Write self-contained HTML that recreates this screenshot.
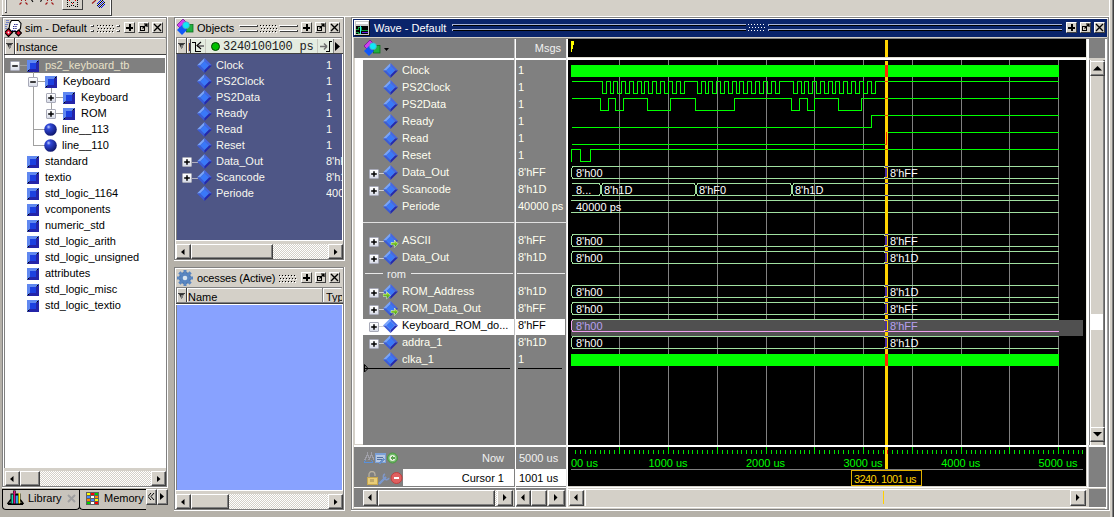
<!DOCTYPE html><html><head><meta charset="utf-8"><style>html,body{margin:0;padding:0;}body{width:1114px;height:517px;overflow:hidden;position:relative;background:#d4d0c8;font-family:'Liberation Sans', sans-serif;}.a{position:absolute;box-sizing:content-box;}.t{position:absolute;font:11px/13px 'Liberation Sans', sans-serif;white-space:pre;}</style></head><body>
<div class="a" style="left:0px;top:0px;width:1114px;height:16px;background:#d4d0c8;"></div>
<div class="a" style="left:2px;top:0px;width:1px;height:15px;background:#fff;"></div>
<div class="a" style="left:5px;top:0px;width:1px;height:13px;background:#fff;"></div>
<div class="a" style="left:6px;top:0px;width:1px;height:13px;background:#808080;"></div>
<div class="a" style="left:5px;top:12px;width:2px;height:1px;background:#404040;"></div>
<div class="a" style="left:2px;top:15px;width:110px;height:1px;background:#404040;"></div>
<div class="a" style="left:111px;top:0px;width:1px;height:16px;background:#404040;"></div>
<div class="a" style="left:110px;top:0px;width:1px;height:15px;background:#fff;"></div>
<div class="a" style="left:0px;top:16px;width:1115px;height:1px;background:#fff;"></div>
<svg class="a" style="left:0px;top:0px;" width="60" height="8" viewBox="0 0 60 8" shape-rendering="crispEdges"><g shape-rendering="geometricPrecision" fill="none"><path d="M21.5 0V1M21.5 2.5L19.5 4.5M25.5 0V1M25.5 2.5L27.5 4.5M47.5 0V1M47.5 2.5L45.5 4.5M51.5 0V1M51.5 2.5L53.5 4.5" stroke="#a01818" stroke-width="1.1"/><path d="M31.5 0L33 1.8M41.5 0L40.5 1.8" stroke="#000" stroke-width="1.1"/></g></svg>
<div class="a" style="left:62px;top:-2px;width:19px;height:11px;background:#d4d0c8;border-left:1px solid #fff;border-bottom:1px solid #404040;border-right:1px solid #404040"></div>
<svg class="a" style="left:67px;top:0px;" width="11" height="8" viewBox="0 0 11 8" shape-rendering="crispEdges"><rect x="0" y="0" width="1" height="1" fill="#000"/><rect x="10" y="0" width="1" height="1" fill="#000"/><rect x="0" y="2" width="1" height="1" fill="#000"/><rect x="10" y="2" width="1" height="1" fill="#000"/><rect x="0" y="4" width="1" height="1" fill="#000"/><rect x="10" y="4" width="1" height="1" fill="#000"/><rect x="0" y="6" width="1" height="1" fill="#000"/><rect x="10" y="6" width="1" height="1" fill="#000"/><rect x="2" y="6" width="1" height="1" fill="#000"/><rect x="4" y="5" width="1" height="1" fill="#000"/><rect x="6" y="5" width="1" height="1" fill="#000"/><rect x="8" y="6" width="1" height="1" fill="#000"/><rect x="4" y="2" width="1" height="1" fill="#000"/><rect x="6" y="2" width="1" height="1" fill="#000"/><rect x="2" y="0" width="1" height="1" fill="#f00"/><rect x="8" y="0" width="1" height="1" fill="#f00"/><rect x="5" y="3" width="1" height="1" fill="#f00"/></svg>
<svg class="a" style="left:0px;top:0px;" width="110" height="9" viewBox="0 0 110 9" shape-rendering="crispEdges"><path d="M92 3.5L96 0" stroke="#a02020" stroke-width="1.2" shape-rendering="geometricPrecision"/><rect x="100" y="0" width="1" height="1" fill="#0010f0"/><rect x="102" y="0" width="1" height="1" fill="#000"/><rect x="99" y="1" width="1" height="1" fill="#0010f0"/><rect x="101" y="1" width="1" height="1" fill="#000"/><rect x="103" y="1" width="1" height="1" fill="#0010f0"/><rect x="98" y="2" width="1" height="1" fill="#0010f0"/><rect x="100" y="2" width="1" height="1" fill="#000"/><rect x="102" y="2" width="1" height="1" fill="#0010f0"/><rect x="104" y="2" width="1" height="1" fill="#000"/><rect x="97" y="3" width="1" height="1" fill="#0010f0"/><rect x="99" y="3" width="1" height="1" fill="#000"/><rect x="101" y="3" width="1" height="1" fill="#0010f0"/><rect x="103" y="3" width="1" height="1" fill="#000"/><rect x="98" y="4" width="1" height="1" fill="#000"/><rect x="100" y="4" width="1" height="1" fill="#0010f0"/><rect x="102" y="4" width="1" height="1" fill="#000"/><rect x="104" y="4" width="1" height="1" fill="#0010f0"/><rect x="97" y="5" width="1" height="1" fill="#000"/><rect x="99" y="5" width="1" height="1" fill="#0010f0"/><rect x="101" y="5" width="1" height="1" fill="#000"/><rect x="103" y="5" width="1" height="1" fill="#0010f0"/><rect x="98" y="6" width="1" height="1" fill="#0010f0"/><rect x="100" y="6" width="1" height="1" fill="#000"/><rect x="102" y="6" width="1" height="1" fill="#0010f0"/><rect x="99" y="7" width="1" height="1" fill="#000"/><rect x="101" y="7" width="1" height="1" fill="#0010f0"/></svg>
<div class="a" style="left:0px;top:17px;width:1114px;height:500px;background:#b5b1a9;"></div>
<div class="a" style="left:2px;top:17px;width:166px;height:494px;background:#d4d0c8;"></div>
<svg class="a" style="left:5px;top:19px;" width="17" height="18" viewBox="0 0 17 18" shape-rendering="crispEdges"><g shape-rendering="geometricPrecision"><path d="M1 1.5h3M1 3.5h3M0 5.5h3M0 7.5h2M0 9.5h2" stroke="#7080c8"/><polygon points="6.5,1.5 13.5,1.5 16,4.5 15.5,9 14,12.5 6,12.5 4,10 5,4" fill="#fff" stroke="#000" stroke-width="1.1"/><path d="M9 5.5h4M8 7.5h4M8 9.5h4M7 11.5h4" stroke="#303090" stroke-dasharray="1.5 0.7"/><polygon points="3.5,9.5 7.5,13.5 3.5,17.5 -0.5,13.5" fill="#e01030" stroke="#000" stroke-width="1.2"/><circle cx="3.5" cy="13.5" r="0.9" fill="#fff"/><polygon points="13.5,11 16.5,14 13.5,17 10.5,14" fill="#e01030" stroke="#000" stroke-width="1.2"/></g></svg>
<div class="t" style="left:25px;top:22px;color:#000;">sim - Default</div>
<div class="a" style="left:90px;top:25px;width:4px;height:1px;background:#fff;"></div>
<div class="a" style="left:91px;top:26px;width:3px;height:1px;background:#404040;"></div>
<div class="a" style="left:93px;top:25px;width:1px;height:2px;background:#404040;"></div>
<div class="a" style="left:90px;top:30px;width:4px;height:1px;background:#fff;"></div>
<div class="a" style="left:91px;top:31px;width:3px;height:1px;background:#404040;"></div>
<div class="a" style="left:93px;top:30px;width:1px;height:2px;background:#404040;"></div>
<svg class="a" style="left:97px;top:25px;" width="19" height="8" viewBox="0 0 19 8" shape-rendering="crispEdges"><rect x="0" y="0" width="1" height="1" fill="#000"/><rect x="1" y="1" width="1" height="1" fill="#fff"/><rect x="3" y="0" width="1" height="1" fill="#000"/><rect x="4" y="1" width="1" height="1" fill="#fff"/><rect x="6" y="0" width="1" height="1" fill="#000"/><rect x="7" y="1" width="1" height="1" fill="#fff"/><rect x="9" y="0" width="1" height="1" fill="#000"/><rect x="10" y="1" width="1" height="1" fill="#fff"/><rect x="12" y="0" width="1" height="1" fill="#000"/><rect x="13" y="1" width="1" height="1" fill="#fff"/><rect x="15" y="0" width="1" height="1" fill="#000"/><rect x="16" y="1" width="1" height="1" fill="#fff"/><rect x="1" y="3" width="1" height="1" fill="#000"/><rect x="2" y="4" width="1" height="1" fill="#fff"/><rect x="4" y="3" width="1" height="1" fill="#000"/><rect x="5" y="4" width="1" height="1" fill="#fff"/><rect x="7" y="3" width="1" height="1" fill="#000"/><rect x="8" y="4" width="1" height="1" fill="#fff"/><rect x="10" y="3" width="1" height="1" fill="#000"/><rect x="11" y="4" width="1" height="1" fill="#fff"/><rect x="13" y="3" width="1" height="1" fill="#000"/><rect x="14" y="4" width="1" height="1" fill="#fff"/><rect x="16" y="3" width="1" height="1" fill="#000"/><rect x="17" y="4" width="1" height="1" fill="#fff"/><rect x="0" y="6" width="1" height="1" fill="#000"/><rect x="1" y="7" width="1" height="1" fill="#fff"/><rect x="3" y="6" width="1" height="1" fill="#000"/><rect x="4" y="7" width="1" height="1" fill="#fff"/><rect x="6" y="6" width="1" height="1" fill="#000"/><rect x="7" y="7" width="1" height="1" fill="#fff"/><rect x="9" y="6" width="1" height="1" fill="#000"/><rect x="10" y="7" width="1" height="1" fill="#fff"/><rect x="12" y="6" width="1" height="1" fill="#000"/><rect x="13" y="7" width="1" height="1" fill="#fff"/><rect x="15" y="6" width="1" height="1" fill="#000"/><rect x="16" y="7" width="1" height="1" fill="#fff"/></svg>
<div class="a" style="left:116px;top:25px;width:4px;height:1px;background:#fff;"></div>
<div class="a" style="left:117px;top:26px;width:3px;height:1px;background:#404040;"></div>
<div class="a" style="left:119px;top:25px;width:1px;height:2px;background:#404040;"></div>
<div class="a" style="left:116px;top:30px;width:4px;height:1px;background:#fff;"></div>
<div class="a" style="left:117px;top:31px;width:3px;height:1px;background:#404040;"></div>
<div class="a" style="left:119px;top:30px;width:1px;height:2px;background:#404040;"></div>
<div class="a" style="left:124px;top:22px;width:9px;height:9px;background:#d4d0c8;border:1px solid;border-color:#fff #404040 #404040 #fff"></div>
<svg class="a" style="left:126px;top:24px;" width="7" height="7" viewBox="0 0 7 7" shape-rendering="crispEdges"><rect x="3" y="0" width="2" height="7" fill="#000"/><rect x="0" y="3" width="7" height="2" fill="#000"/></svg>
<div class="a" style="left:138px;top:22px;width:9px;height:9px;background:#d4d0c8;border:1px solid;border-color:#fff #404040 #404040 #fff"></div>
<svg class="a" style="left:140px;top:23px;" width="8" height="8" viewBox="0 0 8 8" shape-rendering="crispEdges"><rect x="0.5" y="3.5" width="4" height="4" fill="none" stroke="#000"/><path d="M2.5 5.5 L7 1 M4 1 H7 V4" stroke="#000" stroke-width="1.2" fill="none" shape-rendering="geometricPrecision"/></svg>
<div class="a" style="left:152px;top:22px;width:9px;height:9px;background:#d4d0c8;border:1px solid;border-color:#fff #404040 #404040 #fff"></div>
<svg class="a" style="left:153px;top:23px;" width="9" height="9" viewBox="0 0 9 9" shape-rendering="crispEdges"><path d="M1 1 L8 8 M8 1 L1 8" stroke="#000" stroke-width="1.4" shape-rendering="geometricPrecision"/></svg>
<div class="a" style="left:4px;top:37px;width:162px;height:18px;background:#d4d0c8;"></div>
<div class="a" style="left:4px;top:37px;width:162px;height:1px;background:#808080;"></div>
<div class="a" style="left:5px;top:38px;width:160px;height:1px;background:#fff;"></div>
<div class="a" style="left:4px;top:37px;width:1px;height:18px;background:#808080;"></div>
<div class="a" style="left:5px;top:38px;width:1px;height:16px;background:#fff;"></div>
<div class="a" style="left:4px;top:54px;width:162px;height:1px;background:#404040;"></div>
<div class="a" style="left:14px;top:38px;width:1px;height:16px;background:#404040;"></div>
<div class="a" style="left:15px;top:38px;width:1px;height:16px;background:#fff;"></div>
<svg class="a" style="left:6px;top:43px;" width="8" height="8" viewBox="0 0 8 8" shape-rendering="crispEdges"><path d="M0 0h7v1H0z" fill="#404040"/><path d="M1 1h5L3.5 6z" fill="#303030" shape-rendering="geometricPrecision"/><path d="M2.5 2h2v3h-2z" fill="#808080"/></svg>
<div class="t" style="left:16px;top:41px;color:#000;">Instance</div>
<div class="a" style="left:5px;top:55px;width:161px;height:413px;background:#fff;"></div>
<div class="a" style="left:4px;top:55px;width:1px;height:413px;background:#808080;"></div>
<div class="a" style="left:5px;top:58px;width:160px;height:15px;background:#808080;"></div>
<div class="a" style="left:33px;top:72px;width:1px;height:74px;background:#a0a0a0;"></div>
<div class="a" style="left:33px;top:145px;width:12px;height:1px;background:#a0a0a0;"></div>
<div class="a" style="left:33px;top:129px;width:12px;height:1px;background:#a0a0a0;"></div>
<div class="a" style="left:51px;top:88px;width:1px;height:26px;background:#a0a0a0;"></div>
<div class="a" style="left:51px;top:97px;width:12px;height:1px;background:#a0a0a0;"></div>
<div class="a" style="left:51px;top:113px;width:12px;height:1px;background:#a0a0a0;"></div>
<div class="a" style="left:20px;top:65px;width:8px;height:1px;background:#a0a0a0;"></div>
<div class="a" style="left:38px;top:81px;width:8px;height:1px;background:#a0a0a0;"></div>
<svg class="a" style="left:27px;top:60px;" width="12" height="12" viewBox="0 0 12 12" shape-rendering="crispEdges"><rect x="0" y="0" width="12" height="12" fill="#6088f0"/><polygon points="12,0 12,12 0,12" fill="#2424a8"/><rect x="3" y="3" width="6" height="6" fill="#1c40e0"/><path d="M9.5 2.5L11.5 0.5M0.5 11.5L2.5 9.5" stroke="#000" shape-rendering="geometricPrecision"/></svg>
<div class="a" style="left:10px;top:61px;width:8px;height:8px;border:1px solid #a8aab8;border-radius:1px;background:linear-gradient(#fff,#d8dce8)"></div>
<svg class="a" style="left:10px;top:61px;" width="10" height="10" viewBox="0 0 10 10" shape-rendering="crispEdges"><path d="M2.2 5H7.8" stroke="#000" stroke-width="1.5" shape-rendering="geometricPrecision"/></svg>
<div class="t" style="left:45px;top:59px;color:#e8e0c8;">ps2_keyboard_tb</div>
<svg class="a" style="left:45px;top:76px;" width="12" height="12" viewBox="0 0 12 12" shape-rendering="crispEdges"><rect x="0" y="0" width="12" height="12" fill="#6088f0"/><polygon points="12,0 12,12 0,12" fill="#2424a8"/><rect x="3" y="3" width="6" height="6" fill="#1c40e0"/><path d="M9.5 2.5L11.5 0.5M0.5 11.5L2.5 9.5" stroke="#000" shape-rendering="geometricPrecision"/></svg>
<div class="a" style="left:28px;top:77px;width:8px;height:8px;border:1px solid #a8aab8;border-radius:1px;background:linear-gradient(#fff,#d8dce8)"></div>
<svg class="a" style="left:28px;top:77px;" width="10" height="10" viewBox="0 0 10 10" shape-rendering="crispEdges"><path d="M2.2 5H7.8" stroke="#000" stroke-width="1.5" shape-rendering="geometricPrecision"/></svg>
<div class="t" style="left:63px;top:75px;color:#000;">Keyboard</div>
<svg class="a" style="left:63px;top:92px;" width="12" height="12" viewBox="0 0 12 12" shape-rendering="crispEdges"><rect x="0" y="0" width="12" height="12" fill="#6088f0"/><polygon points="12,0 12,12 0,12" fill="#2424a8"/><rect x="3" y="3" width="6" height="6" fill="#1c40e0"/><path d="M9.5 2.5L11.5 0.5M0.5 11.5L2.5 9.5" stroke="#000" shape-rendering="geometricPrecision"/></svg>
<div class="a" style="left:46px;top:93px;width:8px;height:8px;border:1px solid #a8aab8;border-radius:1px;background:linear-gradient(#fff,#d8dce8)"></div>
<svg class="a" style="left:46px;top:93px;" width="10" height="10" viewBox="0 0 10 10" shape-rendering="crispEdges"><path d="M2.2 5H7.8M5 2.2V7.8" stroke="#000" stroke-width="1.5" shape-rendering="geometricPrecision"/></svg>
<div class="t" style="left:81px;top:91px;color:#000;">Keyboard</div>
<svg class="a" style="left:63px;top:108px;" width="12" height="12" viewBox="0 0 12 12" shape-rendering="crispEdges"><rect x="0" y="0" width="12" height="12" fill="#6088f0"/><polygon points="12,0 12,12 0,12" fill="#2424a8"/><rect x="3" y="3" width="6" height="6" fill="#1c40e0"/><path d="M9.5 2.5L11.5 0.5M0.5 11.5L2.5 9.5" stroke="#000" shape-rendering="geometricPrecision"/></svg>
<div class="a" style="left:46px;top:109px;width:8px;height:8px;border:1px solid #a8aab8;border-radius:1px;background:linear-gradient(#fff,#d8dce8)"></div>
<svg class="a" style="left:46px;top:109px;" width="10" height="10" viewBox="0 0 10 10" shape-rendering="crispEdges"><path d="M2.2 5H7.8M5 2.2V7.8" stroke="#000" stroke-width="1.5" shape-rendering="geometricPrecision"/></svg>
<div class="t" style="left:81px;top:107px;color:#000;">ROM</div>
<svg class="a" style="left:44px;top:123px;" width="13" height="13" viewBox="0 0 13 13" shape-rendering="crispEdges"><defs><radialGradient id="sg" cx="0.35" cy="0.3" r="0.7"><stop offset="0" stop-color="#c0d0ff"/><stop offset="0.25" stop-color="#3048d8"/><stop offset="1" stop-color="#101870"/></radialGradient></defs><circle cx="6.5" cy="6.5" r="6.3" fill="url(#sg)" shape-rendering="geometricPrecision"/></svg>
<div class="t" style="left:62px;top:123px;color:#000;">line__113</div>
<svg class="a" style="left:44px;top:139px;" width="13" height="13" viewBox="0 0 13 13" shape-rendering="crispEdges"><defs><radialGradient id="sg" cx="0.35" cy="0.3" r="0.7"><stop offset="0" stop-color="#c0d0ff"/><stop offset="0.25" stop-color="#3048d8"/><stop offset="1" stop-color="#101870"/></radialGradient></defs><circle cx="6.5" cy="6.5" r="6.3" fill="url(#sg)" shape-rendering="geometricPrecision"/></svg>
<div class="t" style="left:62px;top:139px;color:#000;">line__110</div>
<svg class="a" style="left:27px;top:156px;" width="12" height="12" viewBox="0 0 12 12" shape-rendering="crispEdges"><rect x="0" y="0" width="12" height="12" fill="#6088f0"/><polygon points="12,0 12,12 0,12" fill="#2424a8"/><rect x="3" y="3" width="6" height="6" fill="#1c40e0"/><path d="M9.5 2.5L11.5 0.5M0.5 11.5L2.5 9.5" stroke="#000" shape-rendering="geometricPrecision"/></svg>
<div class="t" style="left:45px;top:155px;color:#000;">standard</div>
<svg class="a" style="left:27px;top:172px;" width="12" height="12" viewBox="0 0 12 12" shape-rendering="crispEdges"><rect x="0" y="0" width="12" height="12" fill="#6088f0"/><polygon points="12,0 12,12 0,12" fill="#2424a8"/><rect x="3" y="3" width="6" height="6" fill="#1c40e0"/><path d="M9.5 2.5L11.5 0.5M0.5 11.5L2.5 9.5" stroke="#000" shape-rendering="geometricPrecision"/></svg>
<div class="t" style="left:45px;top:171px;color:#000;">textio</div>
<svg class="a" style="left:27px;top:188px;" width="12" height="12" viewBox="0 0 12 12" shape-rendering="crispEdges"><rect x="0" y="0" width="12" height="12" fill="#6088f0"/><polygon points="12,0 12,12 0,12" fill="#2424a8"/><rect x="3" y="3" width="6" height="6" fill="#1c40e0"/><path d="M9.5 2.5L11.5 0.5M0.5 11.5L2.5 9.5" stroke="#000" shape-rendering="geometricPrecision"/></svg>
<div class="t" style="left:45px;top:187px;color:#000;">std_logic_1164</div>
<svg class="a" style="left:27px;top:204px;" width="12" height="12" viewBox="0 0 12 12" shape-rendering="crispEdges"><rect x="0" y="0" width="12" height="12" fill="#6088f0"/><polygon points="12,0 12,12 0,12" fill="#2424a8"/><rect x="3" y="3" width="6" height="6" fill="#1c40e0"/><path d="M9.5 2.5L11.5 0.5M0.5 11.5L2.5 9.5" stroke="#000" shape-rendering="geometricPrecision"/></svg>
<div class="t" style="left:45px;top:203px;color:#000;">vcomponents</div>
<svg class="a" style="left:27px;top:220px;" width="12" height="12" viewBox="0 0 12 12" shape-rendering="crispEdges"><rect x="0" y="0" width="12" height="12" fill="#6088f0"/><polygon points="12,0 12,12 0,12" fill="#2424a8"/><rect x="3" y="3" width="6" height="6" fill="#1c40e0"/><path d="M9.5 2.5L11.5 0.5M0.5 11.5L2.5 9.5" stroke="#000" shape-rendering="geometricPrecision"/></svg>
<div class="t" style="left:45px;top:219px;color:#000;">numeric_std</div>
<svg class="a" style="left:27px;top:236px;" width="12" height="12" viewBox="0 0 12 12" shape-rendering="crispEdges"><rect x="0" y="0" width="12" height="12" fill="#6088f0"/><polygon points="12,0 12,12 0,12" fill="#2424a8"/><rect x="3" y="3" width="6" height="6" fill="#1c40e0"/><path d="M9.5 2.5L11.5 0.5M0.5 11.5L2.5 9.5" stroke="#000" shape-rendering="geometricPrecision"/></svg>
<div class="t" style="left:45px;top:235px;color:#000;">std_logic_arith</div>
<svg class="a" style="left:27px;top:252px;" width="12" height="12" viewBox="0 0 12 12" shape-rendering="crispEdges"><rect x="0" y="0" width="12" height="12" fill="#6088f0"/><polygon points="12,0 12,12 0,12" fill="#2424a8"/><rect x="3" y="3" width="6" height="6" fill="#1c40e0"/><path d="M9.5 2.5L11.5 0.5M0.5 11.5L2.5 9.5" stroke="#000" shape-rendering="geometricPrecision"/></svg>
<div class="t" style="left:45px;top:251px;color:#000;">std_logic_unsigned</div>
<svg class="a" style="left:27px;top:268px;" width="12" height="12" viewBox="0 0 12 12" shape-rendering="crispEdges"><rect x="0" y="0" width="12" height="12" fill="#6088f0"/><polygon points="12,0 12,12 0,12" fill="#2424a8"/><rect x="3" y="3" width="6" height="6" fill="#1c40e0"/><path d="M9.5 2.5L11.5 0.5M0.5 11.5L2.5 9.5" stroke="#000" shape-rendering="geometricPrecision"/></svg>
<div class="t" style="left:45px;top:267px;color:#000;">attributes</div>
<svg class="a" style="left:27px;top:284px;" width="12" height="12" viewBox="0 0 12 12" shape-rendering="crispEdges"><rect x="0" y="0" width="12" height="12" fill="#6088f0"/><polygon points="12,0 12,12 0,12" fill="#2424a8"/><rect x="3" y="3" width="6" height="6" fill="#1c40e0"/><path d="M9.5 2.5L11.5 0.5M0.5 11.5L2.5 9.5" stroke="#000" shape-rendering="geometricPrecision"/></svg>
<div class="t" style="left:45px;top:283px;color:#000;">std_logic_misc</div>
<svg class="a" style="left:27px;top:300px;" width="12" height="12" viewBox="0 0 12 12" shape-rendering="crispEdges"><rect x="0" y="0" width="12" height="12" fill="#6088f0"/><polygon points="12,0 12,12 0,12" fill="#2424a8"/><rect x="3" y="3" width="6" height="6" fill="#1c40e0"/><path d="M9.5 2.5L11.5 0.5M0.5 11.5L2.5 9.5" stroke="#000" shape-rendering="geometricPrecision"/></svg>
<div class="t" style="left:45px;top:299px;color:#000;">std_logic_textio</div>
<div class="a" style="left:4px;top:468px;width:162px;height:19px;background:#d4d0c8;"></div>
<div class="a" style="left:20px;top:471px;width:131px;height:15px;background-image:repeating-conic-gradient(#fff 0 25%, #d4d0c8 0 50%);background-size:2px 2px"></div>
<div class="a" style="left:5px;top:471px;width:13px;height:13px;background:#d4d0c8;border:1px solid;border-color:#fff #404040 #404040 #fff;box-shadow:inset -1px -1px #808080"></div>
<svg class="a" style="left:10px;top:476px;" width="5" height="8" viewBox="0 0 5 8" shape-rendering="crispEdges"><path d="M3.5 0V6L0 3z" fill="#000" shape-rendering="geometricPrecision"/></svg>
<div class="a" style="left:20px;top:471px;width:18px;height:13px;background:#d4d0c8;border:1px solid;border-color:#fff #404040 #404040 #fff;box-shadow:inset -1px -1px #808080"></div>
<div class="a" style="left:151px;top:471px;width:13px;height:13px;background:#d4d0c8;border:1px solid;border-color:#fff #404040 #404040 #fff;box-shadow:inset -1px -1px #808080"></div>
<svg class="a" style="left:157px;top:476px;" width="5" height="8" viewBox="0 0 5 8" shape-rendering="crispEdges"><path d="M0 0V6L3.5 3z" fill="#000" shape-rendering="geometricPrecision"/></svg>
<div class="a" style="left:2px;top:486px;width:166px;height:1px;background:#404040;"></div>
<div class="a" style="left:2px;top:487px;width:166px;height:1px;background:#fff;"></div>
<div class="a" style="left:0px;top:488px;width:168px;height:29px;background:#b5b1a9;"></div>
<div class="a" style="left:2px;top:489px;width:76px;height:20px;background:#c8c4bc;border:1px solid #000;border-top:none;border-radius:0 0 4px 4px"></div>
<div class="a" style="left:79px;top:489px;width:66px;height:20px;background:#c8c4bc;border:1px solid #000;border-top:none;border-right:none;border-radius:0 0 0 4px"></div>
<div class="a" style="left:2px;top:489px;width:145px;height:1px;background:#000;"></div>
<svg class="a" style="left:6px;top:489px;" width="19" height="17" viewBox="0 0 19 17" shape-rendering="crispEdges"><g shape-rendering="geometricPrecision"><path d="M1.5 15L5 10.5M17.5 15L14 10.5" stroke="#000" stroke-width="1.6"/><rect x="2" y="14" width="15" height="2" fill="#000"/><rect x="4.5" y="4.5" width="10" height="10" fill="#000"/><rect x="5.5" y="5.5" width="1.6" height="9" fill="#10e0b0"/><rect x="7.6" y="2" width="1.6" height="12.5" fill="#e01080"/><rect x="9.7" y="6.5" width="2.2" height="8" fill="#30a8f0"/><rect x="12.5" y="4" width="1.6" height="10.5" fill="#f8f020"/><rect x="7.1" y="1.5" width="2.6" height="3" fill="#000"/><rect x="7.6" y="2" width="1.6" height="3" fill="#e01080"/></g></svg>
<div class="t" style="left:28px;top:492px;color:#000;">Library</div>
<svg class="a" style="left:67px;top:494px;" width="9" height="9" viewBox="0 0 9 9" shape-rendering="crispEdges"><path d="M1 1L8 8M8 1L1 8" stroke="#a0a0a0" stroke-width="2" shape-rendering="geometricPrecision"/></svg>
<svg class="a" style="left:86px;top:492px;" width="13" height="13" viewBox="0 0 13 13" shape-rendering="crispEdges"><rect width="13" height="13" fill="#606060"/><rect x="1" y="1" width="3" height="2" fill="#ff0"/><rect x="5" y="1" width="3" height="2" fill="#f00"/><rect x="9" y="1" width="3" height="2" fill="#0c0"/><rect x="1" y="4" width="3" height="2" fill="#48f"/><rect x="5" y="4" width="3" height="2" fill="#fff"/><rect x="9" y="4" width="3" height="2" fill="#f80"/><rect x="1" y="7" width="3" height="2" fill="#f80"/><rect x="5" y="7" width="3" height="2" fill="#48f"/><rect x="9" y="7" width="3" height="2" fill="#ff0"/><rect x="1" y="10" width="3" height="2" fill="#0c0"/><rect x="5" y="10" width="3" height="2" fill="#fff"/><rect x="9" y="10" width="3" height="2" fill="#f00"/></svg>
<div class="t" style="left:104px;top:492px;color:#000;">Memory</div>
<div class="a" style="left:146px;top:489px;width:9px;height:14px;background:#d4d0c8;border:1px solid;border-color:#fff #404040 #404040 #fff;box-shadow:inset -1px -1px #808080"></div>
<svg class="a" style="left:148px;top:493px;" width="7" height="8" viewBox="0 0 7 8" shape-rendering="crispEdges"><path d="M3 0L0 3.5L3 7M6 0L3 3.5L6 7" stroke="#000" fill="none" shape-rendering="geometricPrecision"/></svg>
<div class="a" style="left:157px;top:489px;width:9px;height:14px;background:#d4d0c8;border:1px solid;border-color:#fff #404040 #404040 #fff;box-shadow:inset -1px -1px #808080"></div>
<svg class="a" style="left:160px;top:493px;" width="5" height="8" viewBox="0 0 5 8" shape-rendering="crispEdges"><path d="M0 0V7L4 3.5z" fill="#000" shape-rendering="geometricPrecision"/></svg>
<div class="a" style="left:174px;top:17px;width:171px;height:244px;background:#d4d0c8;"></div>
<svg class="a" style="left:177px;top:19px;" width="17" height="17" viewBox="0 0 17 17" shape-rendering="crispEdges"><g shape-rendering="geometricPrecision"><polygon points="0,6 6,0 9,3 3,9" fill="#d040f0" stroke="#700090" stroke-width="0.7"/><rect x="9.5" y="5.5" width="6.5" height="7.5" fill="#20b040" stroke="#107020" stroke-width="0.8"/><polygon points="0,11 5,6 10,11 5,16" fill="#1058f8"/><circle cx="9" cy="6.2" r="3.5" fill="#10e8f8" stroke="#6890b0" stroke-width="0.7"/></g></svg>
<div class="t" style="left:197px;top:22px;color:#000;">Objects</div>
<div class="a" style="left:239px;top:25px;width:19px;height:1px;background:#fff;"></div>
<div class="a" style="left:240px;top:26px;width:18px;height:1px;background:#404040;"></div>
<div class="a" style="left:257px;top:25px;width:1px;height:2px;background:#404040;"></div>
<div class="a" style="left:239px;top:30px;width:19px;height:1px;background:#fff;"></div>
<div class="a" style="left:240px;top:31px;width:18px;height:1px;background:#404040;"></div>
<div class="a" style="left:257px;top:30px;width:1px;height:2px;background:#404040;"></div>
<svg class="a" style="left:260px;top:25px;" width="19" height="8" viewBox="0 0 19 8" shape-rendering="crispEdges"><rect x="0" y="0" width="1" height="1" fill="#000"/><rect x="1" y="1" width="1" height="1" fill="#fff"/><rect x="3" y="0" width="1" height="1" fill="#000"/><rect x="4" y="1" width="1" height="1" fill="#fff"/><rect x="6" y="0" width="1" height="1" fill="#000"/><rect x="7" y="1" width="1" height="1" fill="#fff"/><rect x="9" y="0" width="1" height="1" fill="#000"/><rect x="10" y="1" width="1" height="1" fill="#fff"/><rect x="12" y="0" width="1" height="1" fill="#000"/><rect x="13" y="1" width="1" height="1" fill="#fff"/><rect x="15" y="0" width="1" height="1" fill="#000"/><rect x="16" y="1" width="1" height="1" fill="#fff"/><rect x="1" y="3" width="1" height="1" fill="#000"/><rect x="2" y="4" width="1" height="1" fill="#fff"/><rect x="4" y="3" width="1" height="1" fill="#000"/><rect x="5" y="4" width="1" height="1" fill="#fff"/><rect x="7" y="3" width="1" height="1" fill="#000"/><rect x="8" y="4" width="1" height="1" fill="#fff"/><rect x="10" y="3" width="1" height="1" fill="#000"/><rect x="11" y="4" width="1" height="1" fill="#fff"/><rect x="13" y="3" width="1" height="1" fill="#000"/><rect x="14" y="4" width="1" height="1" fill="#fff"/><rect x="16" y="3" width="1" height="1" fill="#000"/><rect x="17" y="4" width="1" height="1" fill="#fff"/><rect x="0" y="6" width="1" height="1" fill="#000"/><rect x="1" y="7" width="1" height="1" fill="#fff"/><rect x="3" y="6" width="1" height="1" fill="#000"/><rect x="4" y="7" width="1" height="1" fill="#fff"/><rect x="6" y="6" width="1" height="1" fill="#000"/><rect x="7" y="7" width="1" height="1" fill="#fff"/><rect x="9" y="6" width="1" height="1" fill="#000"/><rect x="10" y="7" width="1" height="1" fill="#fff"/><rect x="12" y="6" width="1" height="1" fill="#000"/><rect x="13" y="7" width="1" height="1" fill="#fff"/><rect x="15" y="6" width="1" height="1" fill="#000"/><rect x="16" y="7" width="1" height="1" fill="#fff"/></svg>
<div class="a" style="left:279px;top:25px;width:19px;height:1px;background:#fff;"></div>
<div class="a" style="left:280px;top:26px;width:18px;height:1px;background:#404040;"></div>
<div class="a" style="left:297px;top:25px;width:1px;height:2px;background:#404040;"></div>
<div class="a" style="left:279px;top:30px;width:19px;height:1px;background:#fff;"></div>
<div class="a" style="left:280px;top:31px;width:18px;height:1px;background:#404040;"></div>
<div class="a" style="left:297px;top:30px;width:1px;height:2px;background:#404040;"></div>
<div class="a" style="left:301px;top:22px;width:9px;height:9px;background:#d4d0c8;border:1px solid;border-color:#fff #404040 #404040 #fff"></div>
<svg class="a" style="left:303px;top:24px;" width="7" height="7" viewBox="0 0 7 7" shape-rendering="crispEdges"><rect x="3" y="0" width="2" height="7" fill="#000"/><rect x="0" y="3" width="7" height="2" fill="#000"/></svg>
<div class="a" style="left:315px;top:22px;width:9px;height:9px;background:#d4d0c8;border:1px solid;border-color:#fff #404040 #404040 #fff"></div>
<svg class="a" style="left:317px;top:23px;" width="8" height="8" viewBox="0 0 8 8" shape-rendering="crispEdges"><rect x="0.5" y="3.5" width="4" height="4" fill="none" stroke="#000"/><path d="M2.5 5.5 L7 1 M4 1 H7 V4" stroke="#000" stroke-width="1.2" fill="none" shape-rendering="geometricPrecision"/></svg>
<div class="a" style="left:329px;top:22px;width:9px;height:9px;background:#d4d0c8;border:1px solid;border-color:#fff #404040 #404040 #fff"></div>
<svg class="a" style="left:330px;top:23px;" width="9" height="9" viewBox="0 0 9 9" shape-rendering="crispEdges"><path d="M1 1 L8 8 M8 1 L1 8" stroke="#000" stroke-width="1.4" shape-rendering="geometricPrecision"/></svg>
<div class="a" style="left:176px;top:37px;width:166px;height:17px;background:#d4d0c8;"></div>
<div class="a" style="left:176px;top:37px;width:166px;height:1px;background:#808080;"></div>
<div class="a" style="left:177px;top:38px;width:164px;height:1px;background:#fff;"></div>
<div class="a" style="left:176px;top:37px;width:1px;height:17px;background:#808080;"></div>
<div class="a" style="left:177px;top:38px;width:1px;height:15px;background:#fff;"></div>
<div class="a" style="left:186px;top:38px;width:1px;height:15px;background:#404040;"></div>
<div class="a" style="left:187px;top:38px;width:1px;height:15px;background:#fff;"></div>
<svg class="a" style="left:178px;top:43px;" width="8" height="8" viewBox="0 0 8 8" shape-rendering="crispEdges"><path d="M0 0h7v1H0z" fill="#404040"/><path d="M1 1h5L3.5 6z" fill="#303030" shape-rendering="geometricPrecision"/><path d="M2.5 2h2v3h-2z" fill="#808080"/></svg>
<div class="a" style="left:189px;top:43px;width:1px;height:8px;background:#303070;"></div>
<div class="a" style="left:188px;top:43px;width:1px;height:8px;background:#e0b070;"></div>
<div class="a" style="left:191px;top:39px;width:126px;height:14px;background:#e4ece0"></div>
<div class="a" style="left:318px;top:39px;width:15px;height:14px;background:#e4ece0"></div>
<div class="a" style="left:190px;top:39px;width:1px;height:14px;background:#404040;"></div>
<div class="a" style="left:205px;top:39px;width:1px;height:14px;background:#c8c8c0;"></div>
<div class="a" style="left:317px;top:39px;width:1px;height:14px;background:#c8c8c0;"></div>
<div class="a" style="left:333px;top:39px;width:1px;height:14px;background:#808080;"></div>
<svg class="a" style="left:191px;top:40px;" width="14" height="13" viewBox="0 0 14 13" shape-rendering="crispEdges"><path d="M1 2.5H4.5V11.5H10" stroke="#000" stroke-width="1.2" fill="none"/><path d="M6 5.5H13" stroke="#808080" stroke-width="2" fill="none"/><path d="M10 2L6 5.5L10 9" stroke="#000" stroke-width="1.1" fill="none" shape-rendering="geometricPrecision"/></svg>
<svg class="a" style="left:211px;top:42px;" width="9" height="9" viewBox="0 0 9 9" shape-rendering="crispEdges"><circle cx="4.5" cy="4.5" r="4" fill="#00c000" stroke="#004000" shape-rendering="geometricPrecision"/></svg>
<div class="t" style="left:223px;top:40px;font:12px/14px 'Liberation Mono';letter-spacing:-0.25px;color:#202020">3240100100 ps</div>
<svg class="a" style="left:319px;top:40px;" width="14" height="13" viewBox="0 0 14 13" shape-rendering="crispEdges"><path d="M1 6.5H8M8 6.5L5 3.5M8 6.5L5 9.5" stroke="#707070" stroke-width="1.5" fill="none" shape-rendering="geometricPrecision"/><path d="M7 11.5H10V1.5H13" stroke="#000" fill="none"/></svg>
<svg class="a" style="left:335px;top:42px;" width="6" height="9" viewBox="0 0 6 9" shape-rendering="crispEdges"><path d="M0 0V9L5 4.5z" fill="#000" shape-rendering="geometricPrecision"/></svg>
<div class="a" style="left:176px;top:53px;width:167px;height:1px;background:#404040;"></div>
<div class="a" style="left:176px;top:54px;width:166px;height:186px;background:#4e5686;"></div>
<div class="a" style="left:176px;top:54px;width:1px;height:186px;background:#808080;"></div>
<div class="a" style="left:342px;top:54px;width:1px;height:187px;background:#fff;"></div>
<div class="a" style="left:176px;top:240px;width:166px;height:1px;background:#fff;"></div>
<svg class="a" style="left:197px;top:58px;" width="16" height="16" viewBox="0 0 16 16" shape-rendering="crispEdges"><g shape-rendering="geometricPrecision"><polygon points="0,7.5 7.5,0 7.5,3 3,7.5" fill="#78a4fc"/><polygon points="7.5,0 15,7.5 12,7.5 7.5,3" fill="#4466e4"/><polygon points="0,7.5 3,7.5 7.5,12 7.5,15" fill="#3a5ad8"/><polygon points="15,7.5 7.5,15 7.5,12 12,7.5" fill="#2228b0"/><polygon points="7.5,3 12,7.5 7.5,12 3,7.5" fill="#3a78f8"/></g></svg>
<div class="t" style="left:216px;top:59px;color:#f8f8f0;">Clock</div>
<div class="t" style="right:782px;top:59px;color:#f8f8f0;">1</div>
<svg class="a" style="left:197px;top:74px;" width="16" height="16" viewBox="0 0 16 16" shape-rendering="crispEdges"><g shape-rendering="geometricPrecision"><polygon points="0,7.5 7.5,0 7.5,3 3,7.5" fill="#78a4fc"/><polygon points="7.5,0 15,7.5 12,7.5 7.5,3" fill="#4466e4"/><polygon points="0,7.5 3,7.5 7.5,12 7.5,15" fill="#3a5ad8"/><polygon points="15,7.5 7.5,15 7.5,12 12,7.5" fill="#2228b0"/><polygon points="7.5,3 12,7.5 7.5,12 3,7.5" fill="#3a78f8"/></g></svg>
<div class="t" style="left:216px;top:75px;color:#f8f8f0;">PS2Clock</div>
<div class="t" style="right:782px;top:75px;color:#f8f8f0;">1</div>
<svg class="a" style="left:197px;top:90px;" width="16" height="16" viewBox="0 0 16 16" shape-rendering="crispEdges"><g shape-rendering="geometricPrecision"><polygon points="0,7.5 7.5,0 7.5,3 3,7.5" fill="#78a4fc"/><polygon points="7.5,0 15,7.5 12,7.5 7.5,3" fill="#4466e4"/><polygon points="0,7.5 3,7.5 7.5,12 7.5,15" fill="#3a5ad8"/><polygon points="15,7.5 7.5,15 7.5,12 12,7.5" fill="#2228b0"/><polygon points="7.5,3 12,7.5 7.5,12 3,7.5" fill="#3a78f8"/></g></svg>
<div class="t" style="left:216px;top:91px;color:#f8f8f0;">PS2Data</div>
<div class="t" style="right:782px;top:91px;color:#f8f8f0;">1</div>
<svg class="a" style="left:197px;top:106px;" width="16" height="16" viewBox="0 0 16 16" shape-rendering="crispEdges"><g shape-rendering="geometricPrecision"><polygon points="0,7.5 7.5,0 7.5,3 3,7.5" fill="#78a4fc"/><polygon points="7.5,0 15,7.5 12,7.5 7.5,3" fill="#4466e4"/><polygon points="0,7.5 3,7.5 7.5,12 7.5,15" fill="#3a5ad8"/><polygon points="15,7.5 7.5,15 7.5,12 12,7.5" fill="#2228b0"/><polygon points="7.5,3 12,7.5 7.5,12 3,7.5" fill="#3a78f8"/></g></svg>
<div class="t" style="left:216px;top:107px;color:#f8f8f0;">Ready</div>
<div class="t" style="right:782px;top:107px;color:#f8f8f0;">1</div>
<svg class="a" style="left:197px;top:122px;" width="16" height="16" viewBox="0 0 16 16" shape-rendering="crispEdges"><g shape-rendering="geometricPrecision"><polygon points="0,7.5 7.5,0 7.5,3 3,7.5" fill="#78a4fc"/><polygon points="7.5,0 15,7.5 12,7.5 7.5,3" fill="#4466e4"/><polygon points="0,7.5 3,7.5 7.5,12 7.5,15" fill="#3a5ad8"/><polygon points="15,7.5 7.5,15 7.5,12 12,7.5" fill="#2228b0"/><polygon points="7.5,3 12,7.5 7.5,12 3,7.5" fill="#3a78f8"/></g></svg>
<div class="t" style="left:216px;top:123px;color:#f8f8f0;">Read</div>
<div class="t" style="right:782px;top:123px;color:#f8f8f0;">1</div>
<svg class="a" style="left:197px;top:138px;" width="16" height="16" viewBox="0 0 16 16" shape-rendering="crispEdges"><g shape-rendering="geometricPrecision"><polygon points="0,7.5 7.5,0 7.5,3 3,7.5" fill="#78a4fc"/><polygon points="7.5,0 15,7.5 12,7.5 7.5,3" fill="#4466e4"/><polygon points="0,7.5 3,7.5 7.5,12 7.5,15" fill="#3a5ad8"/><polygon points="15,7.5 7.5,15 7.5,12 12,7.5" fill="#2228b0"/><polygon points="7.5,3 12,7.5 7.5,12 3,7.5" fill="#3a78f8"/></g></svg>
<div class="t" style="left:216px;top:139px;color:#f8f8f0;">Reset</div>
<div class="t" style="right:782px;top:139px;color:#f8f8f0;">1</div>
<div class="a" style="left:182px;top:157px;width:8px;height:8px;border:1px solid #a8aab8;border-radius:1px;background:linear-gradient(#fff,#d8dce8)"></div>
<svg class="a" style="left:182px;top:157px;" width="10" height="10" viewBox="0 0 10 10" shape-rendering="crispEdges"><path d="M2.2 5H7.8M5 2.2V7.8" stroke="#000" stroke-width="1.5" shape-rendering="geometricPrecision"/></svg>
<div class="a" style="left:192px;top:162px;width:6px;height:1px;background:#b0b0c0;"></div>
<svg class="a" style="left:197px;top:154px;" width="16" height="16" viewBox="0 0 16 16" shape-rendering="crispEdges"><g shape-rendering="geometricPrecision"><polygon points="0,7.5 7.5,0 7.5,3 3,7.5" fill="#78a4fc"/><polygon points="7.5,0 15,7.5 12,7.5 7.5,3" fill="#4466e4"/><polygon points="0,7.5 3,7.5 7.5,12 7.5,15" fill="#3a5ad8"/><polygon points="15,7.5 7.5,15 7.5,12 12,7.5" fill="#2228b0"/><polygon points="7.5,3 12,7.5 7.5,12 3,7.5" fill="#3a78f8"/></g></svg>
<div class="t" style="left:216px;top:155px;color:#f8f8f0;">Data_Out</div>
<div class="t" style="left:326px;top:155px;width:16px;overflow:hidden;color:#f8f8f0">8'hFF</div>
<div class="a" style="left:182px;top:173px;width:8px;height:8px;border:1px solid #a8aab8;border-radius:1px;background:linear-gradient(#fff,#d8dce8)"></div>
<svg class="a" style="left:182px;top:173px;" width="10" height="10" viewBox="0 0 10 10" shape-rendering="crispEdges"><path d="M2.2 5H7.8M5 2.2V7.8" stroke="#000" stroke-width="1.5" shape-rendering="geometricPrecision"/></svg>
<div class="a" style="left:192px;top:178px;width:6px;height:1px;background:#b0b0c0;"></div>
<svg class="a" style="left:197px;top:170px;" width="16" height="16" viewBox="0 0 16 16" shape-rendering="crispEdges"><g shape-rendering="geometricPrecision"><polygon points="0,7.5 7.5,0 7.5,3 3,7.5" fill="#78a4fc"/><polygon points="7.5,0 15,7.5 12,7.5 7.5,3" fill="#4466e4"/><polygon points="0,7.5 3,7.5 7.5,12 7.5,15" fill="#3a5ad8"/><polygon points="15,7.5 7.5,15 7.5,12 12,7.5" fill="#2228b0"/><polygon points="7.5,3 12,7.5 7.5,12 3,7.5" fill="#3a78f8"/></g></svg>
<div class="t" style="left:216px;top:171px;color:#f8f8f0;">Scancode</div>
<div class="t" style="left:326px;top:171px;width:16px;overflow:hidden;color:#f8f8f0">8'h1D</div>
<svg class="a" style="left:197px;top:186px;" width="16" height="16" viewBox="0 0 16 16" shape-rendering="crispEdges"><g shape-rendering="geometricPrecision"><polygon points="0,7.5 7.5,0 7.5,3 3,7.5" fill="#78a4fc"/><polygon points="7.5,0 15,7.5 12,7.5 7.5,3" fill="#4466e4"/><polygon points="0,7.5 3,7.5 7.5,12 7.5,15" fill="#3a5ad8"/><polygon points="15,7.5 7.5,15 7.5,12 12,7.5" fill="#2228b0"/><polygon points="7.5,3 12,7.5 7.5,12 3,7.5" fill="#3a78f8"/></g></svg>
<div class="t" style="left:216px;top:187px;color:#f8f8f0;">Periode</div>
<div class="t" style="left:326px;top:187px;width:16px;overflow:hidden;color:#f8f8f0">40000 ps</div>
<div class="a" style="left:176px;top:241px;width:166px;height:19px;background:#d4d0c8;"></div>
<div class="a" style="left:176px;top:240px;width:166px;height:1px;background:#fff;"></div>
<div class="a" style="left:273px;top:244px;width:55px;height:15px;background-image:repeating-conic-gradient(#fff 0 25%, #d4d0c8 0 50%);background-size:2px 2px"></div>
<div class="a" style="left:176px;top:244px;width:13px;height:13px;background:#d4d0c8;border:1px solid;border-color:#fff #404040 #404040 #fff;box-shadow:inset -1px -1px #808080"></div>
<svg class="a" style="left:181px;top:249px;" width="5" height="8" viewBox="0 0 5 8" shape-rendering="crispEdges"><path d="M3.5 0V6L0 3z" fill="#000" shape-rendering="geometricPrecision"/></svg>
<div class="a" style="left:191px;top:244px;width:80px;height:13px;background:#d4d0c8;border:1px solid;border-color:#fff #404040 #404040 #fff;box-shadow:inset -1px -1px #808080"></div>
<div class="a" style="left:328px;top:244px;width:13px;height:13px;background:#d4d0c8;border:1px solid;border-color:#fff #404040 #404040 #fff;box-shadow:inset -1px -1px #808080"></div>
<svg class="a" style="left:334px;top:249px;" width="5" height="8" viewBox="0 0 5 8" shape-rendering="crispEdges"><path d="M0 0V6L3.5 3z" fill="#000" shape-rendering="geometricPrecision"/></svg>
<div class="a" style="left:174px;top:267px;width:171px;height:244px;background:#d4d0c8;"></div>
<svg class="a" style="left:177px;top:270px;" width="17" height="16" viewBox="0 0 17 16" shape-rendering="crispEdges"><g shape-rendering="geometricPrecision"><circle cx="8" cy="8" r="5.5" fill="#5a86c0" stroke="#2a5a98"/><rect x="6.5" y="0" width="3" height="4" fill="#5a86c0" transform="rotate(0 8 8)"/><rect x="6.5" y="0" width="3" height="4" fill="#5a86c0" transform="rotate(45 8 8)"/><rect x="6.5" y="0" width="3" height="4" fill="#5a86c0" transform="rotate(90 8 8)"/><rect x="6.5" y="0" width="3" height="4" fill="#5a86c0" transform="rotate(135 8 8)"/><rect x="6.5" y="0" width="3" height="4" fill="#5a86c0" transform="rotate(180 8 8)"/><rect x="6.5" y="0" width="3" height="4" fill="#5a86c0" transform="rotate(225 8 8)"/><rect x="6.5" y="0" width="3" height="4" fill="#5a86c0" transform="rotate(270 8 8)"/><rect x="6.5" y="0" width="3" height="4" fill="#5a86c0" transform="rotate(315 8 8)"/><circle cx="8" cy="8" r="2.3" fill="#d8e4f0"/></g></svg>
<div class="t" style="left:197px;top:272px;color:#000;letter-spacing:-0.15px">ocesses (Active)</div>
<svg class="a" style="left:279px;top:275px;" width="19" height="8" viewBox="0 0 19 8" shape-rendering="crispEdges"><rect x="0" y="0" width="1" height="1" fill="#000"/><rect x="1" y="1" width="1" height="1" fill="#fff"/><rect x="3" y="0" width="1" height="1" fill="#000"/><rect x="4" y="1" width="1" height="1" fill="#fff"/><rect x="6" y="0" width="1" height="1" fill="#000"/><rect x="7" y="1" width="1" height="1" fill="#fff"/><rect x="9" y="0" width="1" height="1" fill="#000"/><rect x="10" y="1" width="1" height="1" fill="#fff"/><rect x="12" y="0" width="1" height="1" fill="#000"/><rect x="13" y="1" width="1" height="1" fill="#fff"/><rect x="15" y="0" width="1" height="1" fill="#000"/><rect x="16" y="1" width="1" height="1" fill="#fff"/><rect x="1" y="3" width="1" height="1" fill="#000"/><rect x="2" y="4" width="1" height="1" fill="#fff"/><rect x="4" y="3" width="1" height="1" fill="#000"/><rect x="5" y="4" width="1" height="1" fill="#fff"/><rect x="7" y="3" width="1" height="1" fill="#000"/><rect x="8" y="4" width="1" height="1" fill="#fff"/><rect x="10" y="3" width="1" height="1" fill="#000"/><rect x="11" y="4" width="1" height="1" fill="#fff"/><rect x="13" y="3" width="1" height="1" fill="#000"/><rect x="14" y="4" width="1" height="1" fill="#fff"/><rect x="16" y="3" width="1" height="1" fill="#000"/><rect x="17" y="4" width="1" height="1" fill="#fff"/><rect x="0" y="6" width="1" height="1" fill="#000"/><rect x="1" y="7" width="1" height="1" fill="#fff"/><rect x="3" y="6" width="1" height="1" fill="#000"/><rect x="4" y="7" width="1" height="1" fill="#fff"/><rect x="6" y="6" width="1" height="1" fill="#000"/><rect x="7" y="7" width="1" height="1" fill="#fff"/><rect x="9" y="6" width="1" height="1" fill="#000"/><rect x="10" y="7" width="1" height="1" fill="#fff"/><rect x="12" y="6" width="1" height="1" fill="#000"/><rect x="13" y="7" width="1" height="1" fill="#fff"/><rect x="15" y="6" width="1" height="1" fill="#000"/><rect x="16" y="7" width="1" height="1" fill="#fff"/></svg>
<div class="a" style="left:301px;top:272px;width:9px;height:9px;background:#d4d0c8;border:1px solid;border-color:#fff #404040 #404040 #fff"></div>
<svg class="a" style="left:303px;top:274px;" width="7" height="7" viewBox="0 0 7 7" shape-rendering="crispEdges"><rect x="3" y="0" width="2" height="7" fill="#000"/><rect x="0" y="3" width="7" height="2" fill="#000"/></svg>
<div class="a" style="left:315px;top:272px;width:9px;height:9px;background:#d4d0c8;border:1px solid;border-color:#fff #404040 #404040 #fff"></div>
<svg class="a" style="left:317px;top:273px;" width="8" height="8" viewBox="0 0 8 8" shape-rendering="crispEdges"><rect x="0.5" y="3.5" width="4" height="4" fill="none" stroke="#000"/><path d="M2.5 5.5 L7 1 M4 1 H7 V4" stroke="#000" stroke-width="1.2" fill="none" shape-rendering="geometricPrecision"/></svg>
<div class="a" style="left:329px;top:272px;width:9px;height:9px;background:#d4d0c8;border:1px solid;border-color:#fff #404040 #404040 #fff"></div>
<svg class="a" style="left:330px;top:273px;" width="9" height="9" viewBox="0 0 9 9" shape-rendering="crispEdges"><path d="M1 1 L8 8 M8 1 L1 8" stroke="#000" stroke-width="1.4" shape-rendering="geometricPrecision"/></svg>
<div class="a" style="left:176px;top:287px;width:166px;height:17px;background:#d4d0c8;"></div>
<div class="a" style="left:176px;top:287px;width:166px;height:1px;background:#808080;"></div>
<div class="a" style="left:177px;top:288px;width:164px;height:1px;background:#fff;"></div>
<div class="a" style="left:176px;top:287px;width:1px;height:17px;background:#808080;"></div>
<div class="a" style="left:177px;top:288px;width:1px;height:15px;background:#fff;"></div>
<div class="a" style="left:186px;top:288px;width:1px;height:15px;background:#404040;"></div>
<div class="a" style="left:187px;top:288px;width:1px;height:15px;background:#fff;"></div>
<svg class="a" style="left:178px;top:293px;" width="8" height="8" viewBox="0 0 8 8" shape-rendering="crispEdges"><path d="M0 0h7v1H0z" fill="#404040"/><path d="M1 1h5L3.5 6z" fill="#303030" shape-rendering="geometricPrecision"/><path d="M2.5 2h2v3h-2z" fill="#808080"/></svg>
<div class="t" style="left:188px;top:291px;color:#000;">Name</div>
<div class="a" style="left:322px;top:288px;width:1px;height:15px;background:#808080;"></div>
<div class="a" style="left:323px;top:288px;width:1px;height:15px;background:#fff;"></div>
<div class="t" style="left:326px;top:291px;width:16px;overflow:hidden;color:#000">Type</div>
<div class="a" style="left:176px;top:303px;width:167px;height:1px;background:#404040;"></div>
<div class="a" style="left:176px;top:302px;width:167px;height:1px;background:#808080;"></div>
<div class="a" style="left:176px;top:305px;width:166px;height:185px;background:#88a2ff;"></div>
<div class="a" style="left:176px;top:305px;width:1px;height:185px;background:#808080;"></div>
<div class="a" style="left:342px;top:305px;width:1px;height:186px;background:#fff;"></div>
<div class="a" style="left:176px;top:490px;width:166px;height:1px;background:#fff;"></div>
<div class="a" style="left:176px;top:304px;width:167px;height:1px;background:#fff;"></div>
<div class="a" style="left:176px;top:491px;width:166px;height:19px;background:#d4d0c8;"></div>
<div class="a" style="left:229px;top:494px;width:99px;height:15px;background-image:repeating-conic-gradient(#fff 0 25%, #d4d0c8 0 50%);background-size:2px 2px"></div>
<div class="a" style="left:176px;top:494px;width:13px;height:13px;background:#d4d0c8;border:1px solid;border-color:#fff #404040 #404040 #fff;box-shadow:inset -1px -1px #808080"></div>
<svg class="a" style="left:181px;top:499px;" width="5" height="8" viewBox="0 0 5 8" shape-rendering="crispEdges"><path d="M3.5 0V6L0 3z" fill="#000" shape-rendering="geometricPrecision"/></svg>
<div class="a" style="left:191px;top:494px;width:36px;height:13px;background:#d4d0c8;border:1px solid;border-color:#fff #404040 #404040 #fff;box-shadow:inset -1px -1px #808080"></div>
<div class="a" style="left:328px;top:494px;width:13px;height:13px;background:#d4d0c8;border:1px solid;border-color:#fff #404040 #404040 #fff;box-shadow:inset -1px -1px #808080"></div>
<svg class="a" style="left:334px;top:499px;" width="5" height="8" viewBox="0 0 5 8" shape-rendering="crispEdges"><path d="M0 0V6L3.5 3z" fill="#000" shape-rendering="geometricPrecision"/></svg>
<div class="a" style="left:351px;top:17px;width:758px;height:494px;background:#d4d0c8;"></div>
<div class="a" style="left:1109px;top:0px;width:1px;height:511px;background:#fff;"></div>
<div class="a" style="left:1110px;top:0px;width:2px;height:517px;background:#d4d0c8;"></div>
<div class="a" style="left:1112px;top:0px;width:1px;height:517px;background:#808080;"></div>
<div class="a" style="left:1113px;top:0px;width:1px;height:517px;background:#404040;"></div>
<div class="a" style="left:353px;top:19px;width:754px;height:18px;background:#0a246a;"></div>
<svg class="a" style="left:354px;top:20px;" width="16" height="16" viewBox="0 0 16 16" shape-rendering="crispEdges"><rect x="0" y="0" width="15" height="15" fill="#fff"/><rect x="15" y="1" width="1" height="15" fill="#101010"/><rect x="1" y="15" width="15" height="1" fill="#101010"/><rect x="1" y="1" width="14" height="14" fill="#c8c8c8"/><rect x="2" y="2" width="12" height="2" fill="#fff"/><rect x="2" y="6" width="12" height="8" fill="#000"/><path d="M2 9.5H4V7.5H7V10.5H14M2 12.5H4V13.5H6V12.5" stroke="#10a040" fill="none"/><path d="M6.5 6V14" stroke="#30e8f0"/><path d="M8 12.5H14" stroke="#6020e0"/></svg>
<div class="t" style="left:374px;top:22px;color:#fff;">Wave - Default</div>
<div class="a" style="left:452px;top:24px;width:294px;height:1px;background:#a8b4d8;"></div>
<div class="a" style="left:453px;top:25px;width:293px;height:1px;background:#000;"></div>
<div class="a" style="left:452px;top:29px;width:294px;height:1px;background:#a8b4d8;"></div>
<div class="a" style="left:453px;top:30px;width:293px;height:1px;background:#000;"></div>
<div class="a" style="left:452px;top:24px;width:1px;height:2px;background:#a8b4d8;"></div>
<div class="a" style="left:452px;top:29px;width:1px;height:2px;background:#a8b4d8;"></div>
<div class="a" style="left:768px;top:24px;width:294px;height:1px;background:#a8b4d8;"></div>
<div class="a" style="left:769px;top:25px;width:293px;height:1px;background:#000;"></div>
<div class="a" style="left:768px;top:29px;width:294px;height:1px;background:#a8b4d8;"></div>
<div class="a" style="left:769px;top:30px;width:293px;height:1px;background:#000;"></div>
<div class="a" style="left:768px;top:24px;width:1px;height:2px;background:#a8b4d8;"></div>
<div class="a" style="left:768px;top:29px;width:1px;height:2px;background:#a8b4d8;"></div>
<svg class="a" style="left:748px;top:24px;" width="19" height="8" viewBox="0 0 19 8" shape-rendering="crispEdges"><rect x="0" y="0" width="1" height="1" fill="#fff"/><rect x="3" y="0" width="1" height="1" fill="#fff"/><rect x="6" y="0" width="1" height="1" fill="#fff"/><rect x="9" y="0" width="1" height="1" fill="#fff"/><rect x="12" y="0" width="1" height="1" fill="#fff"/><rect x="15" y="0" width="1" height="1" fill="#fff"/><rect x="1" y="3" width="1" height="1" fill="#fff"/><rect x="4" y="3" width="1" height="1" fill="#fff"/><rect x="7" y="3" width="1" height="1" fill="#fff"/><rect x="10" y="3" width="1" height="1" fill="#fff"/><rect x="13" y="3" width="1" height="1" fill="#fff"/><rect x="16" y="3" width="1" height="1" fill="#fff"/><rect x="0" y="6" width="1" height="1" fill="#fff"/><rect x="3" y="6" width="1" height="1" fill="#fff"/><rect x="6" y="6" width="1" height="1" fill="#fff"/><rect x="9" y="6" width="1" height="1" fill="#fff"/><rect x="12" y="6" width="1" height="1" fill="#fff"/><rect x="15" y="6" width="1" height="1" fill="#fff"/></svg>
<div class="a" style="left:1066px;top:22px;width:9px;height:9px;background:#d4d0c8;border:1px solid;border-color:#fff #404040 #404040 #fff"></div>
<svg class="a" style="left:1068px;top:24px;" width="7" height="7" viewBox="0 0 7 7" shape-rendering="crispEdges"><rect x="3" y="0" width="2" height="7" fill="#000"/><rect x="0" y="3" width="7" height="2" fill="#000"/></svg>
<div class="a" style="left:1080px;top:22px;width:9px;height:9px;background:#d4d0c8;border:1px solid;border-color:#fff #404040 #404040 #fff"></div>
<svg class="a" style="left:1082px;top:23px;" width="8" height="8" viewBox="0 0 8 8" shape-rendering="crispEdges"><rect x="0.5" y="3.5" width="4" height="4" fill="none" stroke="#000"/><path d="M2.5 5.5 L7 1 M4 1 H7 V4" stroke="#000" stroke-width="1.2" fill="none" shape-rendering="geometricPrecision"/></svg>
<div class="a" style="left:1094px;top:22px;width:9px;height:9px;background:#d4d0c8;border:1px solid;border-color:#fff #404040 #404040 #fff"></div>
<svg class="a" style="left:1095px;top:23px;" width="9" height="9" viewBox="0 0 9 9" shape-rendering="crispEdges"><path d="M1 1 L8 8 M8 1 L1 8" stroke="#000" stroke-width="1.4" shape-rendering="geometricPrecision"/></svg>
<div class="a" style="left:353px;top:37px;width:755px;height:1px;background:#d4d0c8;"></div>
<div class="a" style="left:354px;top:38px;width:753px;height:20px;background:#808080;"></div>
<svg class="a" style="left:364px;top:40px;" width="17" height="17" viewBox="0 0 17 17" shape-rendering="crispEdges"><g shape-rendering="geometricPrecision"><polygon points="0,6 6,0 9,3 3,9" fill="#d040f0" stroke="#700090" stroke-width="0.7"/><rect x="9.5" y="5.5" width="6.5" height="7.5" fill="#20b040" stroke="#107020" stroke-width="0.8"/><polygon points="0,11 5,6 10,11 5,16" fill="#1058f8"/><circle cx="9" cy="6.2" r="3.5" fill="#10e8f8" stroke="#6890b0" stroke-width="0.7"/></g></svg>
<svg class="a" style="left:384px;top:48px;" width="6" height="4" viewBox="0 0 6 4" shape-rendering="crispEdges"><path d="M0 0h5L2.5 3z" fill="#000" shape-rendering="geometricPrecision"/></svg>
<div class="a" style="left:355px;top:58px;width:160px;height:2px;background:#fff;"></div>
<div class="a" style="left:355px;top:60px;width:8px;height:384px;background:#fff;"></div>
<div class="a" style="left:363px;top:60px;width:151px;height:385px;background:#808080;"></div>
<div class="a" style="left:515px;top:39px;width:1px;height:406px;background:#fff;"></div>
<div class="a" style="left:514px;top:39px;width:1px;height:406px;background:#c0c0c0;"></div>
<div class="a" style="left:516px;top:39px;width:50px;height:406px;background:#808080;"></div>
<div class="a" style="left:516px;top:58px;width:51px;height:1px;background:#fff;"></div>
<div class="a" style="left:516px;top:59px;width:51px;height:1px;background:#fff;"></div>
<div class="t" style="right:553px;top:42px;color:#f0f0f0;">Msgs</div>
<div class="a" style="left:566px;top:39px;width:1px;height:406px;background:#e8e8e8;"></div>
<div class="a" style="left:567px;top:39px;width:1px;height:406px;background:#fff;"></div>
<div class="a" style="left:568px;top:39px;width:518px;height:406px;background:#000;"></div>
<div class="a" style="left:568px;top:57px;width:519px;height:1px;background:#e0dcd0;"></div>
<div class="a" style="left:568px;top:58px;width:519px;height:1px;background:#fff;"></div>
<div class="a" style="left:568px;top:59px;width:519px;height:1px;background:#fff;"></div>
<div class="a" style="left:885px;top:40px;width:3px;height:17px;background:#ffd400;"></div>
<div class="a" style="left:571px;top:41px;width:3px;height:4px;background:#ffff00;"></div>
<div class="a" style="left:571px;top:45px;width:2px;height:4px;background:#ffff00;"></div>
<div class="a" style="left:571px;top:49px;width:1px;height:3px;background:#ffff00;"></div>
<div class="a" style="left:1086px;top:39px;width:1px;height:406px;background:#e8e8e0;"></div>
<div class="a" style="left:1087px;top:39px;width:1px;height:406px;background:#fff;"></div>
<div class="a" style="left:1088px;top:39px;width:1px;height:406px;background:#fff;"></div>
<div class="a" style="left:1089px;top:39px;width:17px;height:19px;background:#808080;"></div>
<div class="a" style="left:1089px;top:60px;width:17px;height:385px;background:#d4d0c8;"></div>
<div class="a" style="left:1089px;top:60px;width:1px;height:385px;background:#808080;"></div>
<div class="a" style="left:1090px;top:60px;width:1px;height:385px;background:#fff;"></div>
<div class="a" style="left:1091px;top:76px;width:12px;height:351px;background:#d4d0c8;"></div>
<div class="a" style="left:1091px;top:314px;width:12px;height:16px;background:#fff;"></div>
<div class="a" style="left:1103px;top:60px;width:1px;height:385px;background:#808080;"></div>
<div class="a" style="left:1104px;top:60px;width:1px;height:385px;background:#606060;"></div>
<div class="a" style="left:1105px;top:39px;width:1px;height:471px;background:#fff;"></div>
<div class="a" style="left:1106px;top:39px;width:1px;height:471px;background:#fff;"></div>
<div class="a" style="left:1107px;top:37px;width:1px;height:473px;background:#a0a0a0;"></div>
<div class="a" style="left:1090px;top:61px;width:13px;height:13px;background:#d4d0c8;border:1px solid;border-color:#fff #404040 #404040 #fff;box-shadow:inset -1px -1px #808080"></div>
<svg class="a" style="left:1093px;top:66px;" width="9" height="5" viewBox="0 0 9 5" shape-rendering="crispEdges"><path d="M0 4.5h9L4.5 0z" fill="#000" shape-rendering="geometricPrecision"/></svg>
<div class="a" style="left:1090px;top:427px;width:13px;height:13px;background:#d4d0c8;border:1px solid;border-color:#fff #404040 #404040 #fff;box-shadow:inset -1px -1px #808080"></div>
<svg class="a" style="left:1093px;top:432px;" width="9" height="5" viewBox="0 0 9 5" shape-rendering="crispEdges"><path d="M0 0h9L4.5 4.5z" fill="#000" shape-rendering="geometricPrecision"/></svg>
<svg class="a" style="left:383px;top:63px;" width="16" height="16" viewBox="0 0 16 16" shape-rendering="crispEdges"><g shape-rendering="geometricPrecision"><polygon points="0,7.5 7.5,0 7.5,3 3,7.5" fill="#78a4fc"/><polygon points="7.5,0 15,7.5 12,7.5 7.5,3" fill="#4466e4"/><polygon points="0,7.5 3,7.5 7.5,12 7.5,15" fill="#3a5ad8"/><polygon points="15,7.5 7.5,15 7.5,12 12,7.5" fill="#2228b0"/><polygon points="7.5,3 12,7.5 7.5,12 3,7.5" fill="#3a78f8"/></g></svg>
<div class="t" style="left:402px;top:64px;color:#fffff0;">Clock</div>
<div class="t" style="left:518px;top:64px;color:#fffff0;">1</div>
<svg class="a" style="left:383px;top:80px;" width="16" height="16" viewBox="0 0 16 16" shape-rendering="crispEdges"><g shape-rendering="geometricPrecision"><polygon points="0,7.5 7.5,0 7.5,3 3,7.5" fill="#78a4fc"/><polygon points="7.5,0 15,7.5 12,7.5 7.5,3" fill="#4466e4"/><polygon points="0,7.5 3,7.5 7.5,12 7.5,15" fill="#3a5ad8"/><polygon points="15,7.5 7.5,15 7.5,12 12,7.5" fill="#2228b0"/><polygon points="7.5,3 12,7.5 7.5,12 3,7.5" fill="#3a78f8"/></g></svg>
<div class="t" style="left:402px;top:81px;color:#fffff0;">PS2Clock</div>
<div class="t" style="left:518px;top:81px;color:#fffff0;">1</div>
<svg class="a" style="left:383px;top:97px;" width="16" height="16" viewBox="0 0 16 16" shape-rendering="crispEdges"><g shape-rendering="geometricPrecision"><polygon points="0,7.5 7.5,0 7.5,3 3,7.5" fill="#78a4fc"/><polygon points="7.5,0 15,7.5 12,7.5 7.5,3" fill="#4466e4"/><polygon points="0,7.5 3,7.5 7.5,12 7.5,15" fill="#3a5ad8"/><polygon points="15,7.5 7.5,15 7.5,12 12,7.5" fill="#2228b0"/><polygon points="7.5,3 12,7.5 7.5,12 3,7.5" fill="#3a78f8"/></g></svg>
<div class="t" style="left:402px;top:98px;color:#fffff0;">PS2Data</div>
<div class="t" style="left:518px;top:98px;color:#fffff0;">1</div>
<svg class="a" style="left:383px;top:114px;" width="16" height="16" viewBox="0 0 16 16" shape-rendering="crispEdges"><g shape-rendering="geometricPrecision"><polygon points="0,7.5 7.5,0 7.5,3 3,7.5" fill="#78a4fc"/><polygon points="7.5,0 15,7.5 12,7.5 7.5,3" fill="#4466e4"/><polygon points="0,7.5 3,7.5 7.5,12 7.5,15" fill="#3a5ad8"/><polygon points="15,7.5 7.5,15 7.5,12 12,7.5" fill="#2228b0"/><polygon points="7.5,3 12,7.5 7.5,12 3,7.5" fill="#3a78f8"/></g></svg>
<div class="t" style="left:402px;top:115px;color:#fffff0;">Ready</div>
<div class="t" style="left:518px;top:115px;color:#fffff0;">1</div>
<svg class="a" style="left:383px;top:131px;" width="16" height="16" viewBox="0 0 16 16" shape-rendering="crispEdges"><g shape-rendering="geometricPrecision"><polygon points="0,7.5 7.5,0 7.5,3 3,7.5" fill="#78a4fc"/><polygon points="7.5,0 15,7.5 12,7.5 7.5,3" fill="#4466e4"/><polygon points="0,7.5 3,7.5 7.5,12 7.5,15" fill="#3a5ad8"/><polygon points="15,7.5 7.5,15 7.5,12 12,7.5" fill="#2228b0"/><polygon points="7.5,3 12,7.5 7.5,12 3,7.5" fill="#3a78f8"/></g></svg>
<div class="t" style="left:402px;top:132px;color:#fffff0;">Read</div>
<div class="t" style="left:518px;top:132px;color:#fffff0;">1</div>
<svg class="a" style="left:383px;top:148px;" width="16" height="16" viewBox="0 0 16 16" shape-rendering="crispEdges"><g shape-rendering="geometricPrecision"><polygon points="0,7.5 7.5,0 7.5,3 3,7.5" fill="#78a4fc"/><polygon points="7.5,0 15,7.5 12,7.5 7.5,3" fill="#4466e4"/><polygon points="0,7.5 3,7.5 7.5,12 7.5,15" fill="#3a5ad8"/><polygon points="15,7.5 7.5,15 7.5,12 12,7.5" fill="#2228b0"/><polygon points="7.5,3 12,7.5 7.5,12 3,7.5" fill="#3a78f8"/></g></svg>
<div class="t" style="left:402px;top:149px;color:#fffff0;">Reset</div>
<div class="t" style="left:518px;top:149px;color:#fffff0;">1</div>
<div class="a" style="left:369px;top:169px;width:8px;height:8px;border:1px solid #a8aab8;border-radius:1px;background:linear-gradient(#fff,#d8dce8)"></div>
<svg class="a" style="left:369px;top:169px;" width="10" height="10" viewBox="0 0 10 10" shape-rendering="crispEdges"><path d="M2.2 5H7.8M5 2.2V7.8" stroke="#000" stroke-width="1.5" shape-rendering="geometricPrecision"/></svg>
<div class="a" style="left:379px;top:173px;width:5px;height:1px;background:#d0d0d0;"></div>
<svg class="a" style="left:383px;top:165px;" width="16" height="16" viewBox="0 0 16 16" shape-rendering="crispEdges"><g shape-rendering="geometricPrecision"><polygon points="0,7.5 7.5,0 7.5,3 3,7.5" fill="#78a4fc"/><polygon points="7.5,0 15,7.5 12,7.5 7.5,3" fill="#4466e4"/><polygon points="0,7.5 3,7.5 7.5,12 7.5,15" fill="#3a5ad8"/><polygon points="15,7.5 7.5,15 7.5,12 12,7.5" fill="#2228b0"/><polygon points="7.5,3 12,7.5 7.5,12 3,7.5" fill="#3a78f8"/></g></svg>
<div class="t" style="left:402px;top:166px;color:#fffff0;">Data_Out</div>
<div class="t" style="left:518px;top:166px;color:#fffff0;">8'hFF</div>
<div class="a" style="left:369px;top:186px;width:8px;height:8px;border:1px solid #a8aab8;border-radius:1px;background:linear-gradient(#fff,#d8dce8)"></div>
<svg class="a" style="left:369px;top:186px;" width="10" height="10" viewBox="0 0 10 10" shape-rendering="crispEdges"><path d="M2.2 5H7.8M5 2.2V7.8" stroke="#000" stroke-width="1.5" shape-rendering="geometricPrecision"/></svg>
<div class="a" style="left:379px;top:190px;width:5px;height:1px;background:#d0d0d0;"></div>
<svg class="a" style="left:383px;top:182px;" width="16" height="16" viewBox="0 0 16 16" shape-rendering="crispEdges"><g shape-rendering="geometricPrecision"><polygon points="0,7.5 7.5,0 7.5,3 3,7.5" fill="#78a4fc"/><polygon points="7.5,0 15,7.5 12,7.5 7.5,3" fill="#4466e4"/><polygon points="0,7.5 3,7.5 7.5,12 7.5,15" fill="#3a5ad8"/><polygon points="15,7.5 7.5,15 7.5,12 12,7.5" fill="#2228b0"/><polygon points="7.5,3 12,7.5 7.5,12 3,7.5" fill="#3a78f8"/></g></svg>
<div class="t" style="left:402px;top:183px;color:#fffff0;">Scancode</div>
<div class="t" style="left:518px;top:183px;color:#fffff0;">8'h1D</div>
<svg class="a" style="left:383px;top:199px;" width="16" height="16" viewBox="0 0 16 16" shape-rendering="crispEdges"><g shape-rendering="geometricPrecision"><polygon points="0,7.5 7.5,0 7.5,3 3,7.5" fill="#78a4fc"/><polygon points="7.5,0 15,7.5 12,7.5 7.5,3" fill="#4466e4"/><polygon points="0,7.5 3,7.5 7.5,12 7.5,15" fill="#3a5ad8"/><polygon points="15,7.5 7.5,15 7.5,12 12,7.5" fill="#2228b0"/><polygon points="7.5,3 12,7.5 7.5,12 3,7.5" fill="#3a78f8"/></g></svg>
<div class="t" style="left:402px;top:200px;color:#fffff0;">Periode</div>
<div class="t" style="left:518px;top:200px;color:#fffff0;">40000 ps</div>
<div class="a" style="left:363px;top:222px;width:151px;height:1px;background:#e0e0e0;"></div>
<div class="a" style="left:516px;top:222px;width:50px;height:1px;background:#e0e0e0;"></div>
<div class="a" style="left:369px;top:237px;width:8px;height:8px;border:1px solid #a8aab8;border-radius:1px;background:linear-gradient(#fff,#d8dce8)"></div>
<svg class="a" style="left:369px;top:237px;" width="10" height="10" viewBox="0 0 10 10" shape-rendering="crispEdges"><path d="M2.2 5H7.8M5 2.2V7.8" stroke="#000" stroke-width="1.5" shape-rendering="geometricPrecision"/></svg>
<div class="a" style="left:379px;top:241px;width:5px;height:1px;background:#d0d0d0;"></div>
<svg class="a" style="left:383px;top:233px;" width="16" height="16" viewBox="0 0 16 16" shape-rendering="crispEdges"><defs><linearGradient id="ag" x1="0" y1="0" x2="0" y2="1"><stop offset="0" stop-color="#d8ff40"/><stop offset="1" stop-color="#108000"/></linearGradient></defs><g shape-rendering="geometricPrecision"><polygon points="0,7.5 7.5,0 7.5,3 3,7.5" fill="#78a4fc"/><polygon points="7.5,0 15,7.5 12,7.5 7.5,3" fill="#4466e4"/><polygon points="0,7.5 3,7.5 7.5,12 7.5,15" fill="#3a5ad8"/><polygon points="15,7.5 7.5,15 7.5,12 12,7.5" fill="#2228b0"/><polygon points="7.5,3 12,7.5 7.5,12 3,7.5" fill="#3a78f8"/></g><g shape-rendering="geometricPrecision"><polygon points="8,9.5 11.5,9.5 11.5,7 15,10.75 11.5,14.5 11.5,12 8,12" fill="url(#ag)" stroke="#e8ffe0" stroke-width="0.5"/></g></svg>
<div class="t" style="left:402px;top:234px;color:#fffff0;">ASCII</div>
<div class="t" style="left:518px;top:234px;color:#fffff0;">8'hFF</div>
<div class="a" style="left:369px;top:254px;width:8px;height:8px;border:1px solid #a8aab8;border-radius:1px;background:linear-gradient(#fff,#d8dce8)"></div>
<svg class="a" style="left:369px;top:254px;" width="10" height="10" viewBox="0 0 10 10" shape-rendering="crispEdges"><path d="M2.2 5H7.8M5 2.2V7.8" stroke="#000" stroke-width="1.5" shape-rendering="geometricPrecision"/></svg>
<div class="a" style="left:379px;top:258px;width:5px;height:1px;background:#d0d0d0;"></div>
<svg class="a" style="left:383px;top:250px;" width="16" height="16" viewBox="0 0 16 16" shape-rendering="crispEdges"><g shape-rendering="geometricPrecision"><polygon points="0,7.5 7.5,0 7.5,3 3,7.5" fill="#78a4fc"/><polygon points="7.5,0 15,7.5 12,7.5 7.5,3" fill="#4466e4"/><polygon points="0,7.5 3,7.5 7.5,12 7.5,15" fill="#3a5ad8"/><polygon points="15,7.5 7.5,15 7.5,12 12,7.5" fill="#2228b0"/><polygon points="7.5,3 12,7.5 7.5,12 3,7.5" fill="#3a78f8"/></g></svg>
<div class="t" style="left:402px;top:251px;color:#fffff0;">Data_Out</div>
<div class="t" style="left:518px;top:251px;color:#fffff0;">8'h1D</div>
<div class="a" style="left:365px;top:273px;width:18px;height:1px;background:#e8e8e8;"></div>
<div class="a" style="left:411px;top:273px;width:102px;height:1px;background:#e8e8e8;"></div>
<div class="a" style="left:517px;top:273px;width:48px;height:1px;background:#e8e8e8;"></div>
<div class="t" style="left:387px;top:268px;color:#f0f0f0;">rom</div>
<div class="a" style="left:369px;top:288px;width:8px;height:8px;border:1px solid #a8aab8;border-radius:1px;background:linear-gradient(#fff,#d8dce8)"></div>
<svg class="a" style="left:369px;top:288px;" width="10" height="10" viewBox="0 0 10 10" shape-rendering="crispEdges"><path d="M2.2 5H7.8M5 2.2V7.8" stroke="#000" stroke-width="1.5" shape-rendering="geometricPrecision"/></svg>
<div class="a" style="left:379px;top:292px;width:5px;height:1px;background:#d0d0d0;"></div>
<svg class="a" style="left:383px;top:284px;" width="16" height="16" viewBox="0 0 16 16" shape-rendering="crispEdges"><defs><linearGradient id="ag" x1="0" y1="0" x2="0" y2="1"><stop offset="0" stop-color="#d8ff40"/><stop offset="1" stop-color="#108000"/></linearGradient></defs><g shape-rendering="geometricPrecision"><polygon points="0,7.5 7.5,0 7.5,3 3,7.5" fill="#78a4fc"/><polygon points="7.5,0 15,7.5 12,7.5 7.5,3" fill="#4466e4"/><polygon points="0,7.5 3,7.5 7.5,12 7.5,15" fill="#3a5ad8"/><polygon points="15,7.5 7.5,15 7.5,12 12,7.5" fill="#2228b0"/><polygon points="7.5,3 12,7.5 7.5,12 3,7.5" fill="#3a78f8"/></g><g shape-rendering="geometricPrecision"><polygon points="0,10 3.5,10 3.5,7.5 7.5,11.25 3.5,15 3.5,12.5 0,12.5" fill="url(#ag)" stroke="#e8ffe0" stroke-width="0.5"/></g></svg>
<div class="t" style="left:402px;top:285px;color:#fffff0;">ROM_Address</div>
<div class="t" style="left:518px;top:285px;color:#fffff0;">8'h1D</div>
<div class="a" style="left:369px;top:305px;width:8px;height:8px;border:1px solid #a8aab8;border-radius:1px;background:linear-gradient(#fff,#d8dce8)"></div>
<svg class="a" style="left:369px;top:305px;" width="10" height="10" viewBox="0 0 10 10" shape-rendering="crispEdges"><path d="M2.2 5H7.8M5 2.2V7.8" stroke="#000" stroke-width="1.5" shape-rendering="geometricPrecision"/></svg>
<div class="a" style="left:379px;top:309px;width:5px;height:1px;background:#d0d0d0;"></div>
<svg class="a" style="left:383px;top:301px;" width="16" height="16" viewBox="0 0 16 16" shape-rendering="crispEdges"><defs><linearGradient id="ag" x1="0" y1="0" x2="0" y2="1"><stop offset="0" stop-color="#d8ff40"/><stop offset="1" stop-color="#108000"/></linearGradient></defs><g shape-rendering="geometricPrecision"><polygon points="0,7.5 7.5,0 7.5,3 3,7.5" fill="#78a4fc"/><polygon points="7.5,0 15,7.5 12,7.5 7.5,3" fill="#4466e4"/><polygon points="0,7.5 3,7.5 7.5,12 7.5,15" fill="#3a5ad8"/><polygon points="15,7.5 7.5,15 7.5,12 12,7.5" fill="#2228b0"/><polygon points="7.5,3 12,7.5 7.5,12 3,7.5" fill="#3a78f8"/></g><g shape-rendering="geometricPrecision"><polygon points="8,9.5 11.5,9.5 11.5,7 15,10.75 11.5,14.5 11.5,12 8,12" fill="url(#ag)" stroke="#e8ffe0" stroke-width="0.5"/></g></svg>
<div class="t" style="left:402px;top:302px;color:#fffff0;">ROM_Data_Out</div>
<div class="t" style="left:518px;top:302px;color:#fffff0;">8'hFF</div>
<div class="a" style="left:363px;top:319px;width:151px;height:16px;background:#fff;"></div>
<div class="a" style="left:516px;top:319px;width:49px;height:16px;background:#fff;"></div>
<div class="a" style="left:369px;top:322px;width:8px;height:8px;border:1px solid #a8aab8;border-radius:1px;background:linear-gradient(#fff,#d8dce8)"></div>
<svg class="a" style="left:369px;top:322px;" width="10" height="10" viewBox="0 0 10 10" shape-rendering="crispEdges"><path d="M2.2 5H7.8M5 2.2V7.8" stroke="#000" stroke-width="1.5" shape-rendering="geometricPrecision"/></svg>
<div class="a" style="left:379px;top:326px;width:5px;height:1px;background:#d0d0d0;"></div>
<svg class="a" style="left:383px;top:318px;" width="16" height="16" viewBox="0 0 16 16" shape-rendering="crispEdges"><g shape-rendering="geometricPrecision"><polygon points="0,7.5 7.5,0 7.5,3 3,7.5" fill="#78a4fc"/><polygon points="7.5,0 15,7.5 12,7.5 7.5,3" fill="#4466e4"/><polygon points="0,7.5 3,7.5 7.5,12 7.5,15" fill="#3a5ad8"/><polygon points="15,7.5 7.5,15 7.5,12 12,7.5" fill="#2228b0"/><polygon points="7.5,3 12,7.5 7.5,12 3,7.5" fill="#3a78f8"/></g></svg>
<div class="t" style="left:402px;top:319px;color:#000;">Keyboard_ROM_do...</div>
<div class="t" style="left:518px;top:319px;color:#000;">8'hFF</div>
<div class="a" style="left:369px;top:339px;width:8px;height:8px;border:1px solid #a8aab8;border-radius:1px;background:linear-gradient(#fff,#d8dce8)"></div>
<svg class="a" style="left:369px;top:339px;" width="10" height="10" viewBox="0 0 10 10" shape-rendering="crispEdges"><path d="M2.2 5H7.8M5 2.2V7.8" stroke="#000" stroke-width="1.5" shape-rendering="geometricPrecision"/></svg>
<div class="a" style="left:379px;top:343px;width:5px;height:1px;background:#d0d0d0;"></div>
<svg class="a" style="left:383px;top:335px;" width="16" height="16" viewBox="0 0 16 16" shape-rendering="crispEdges"><g shape-rendering="geometricPrecision"><polygon points="0,7.5 7.5,0 7.5,3 3,7.5" fill="#78a4fc"/><polygon points="7.5,0 15,7.5 12,7.5 7.5,3" fill="#4466e4"/><polygon points="0,7.5 3,7.5 7.5,12 7.5,15" fill="#3a5ad8"/><polygon points="15,7.5 7.5,15 7.5,12 12,7.5" fill="#2228b0"/><polygon points="7.5,3 12,7.5 7.5,12 3,7.5" fill="#3a78f8"/></g></svg>
<div class="t" style="left:402px;top:336px;color:#fffff0;">addra_1</div>
<div class="t" style="left:518px;top:336px;color:#fffff0;">8'h1D</div>
<svg class="a" style="left:383px;top:352px;" width="16" height="16" viewBox="0 0 16 16" shape-rendering="crispEdges"><g shape-rendering="geometricPrecision"><polygon points="0,7.5 7.5,0 7.5,3 3,7.5" fill="#78a4fc"/><polygon points="7.5,0 15,7.5 12,7.5 7.5,3" fill="#4466e4"/><polygon points="0,7.5 3,7.5 7.5,12 7.5,15" fill="#3a5ad8"/><polygon points="15,7.5 7.5,15 7.5,12 12,7.5" fill="#2228b0"/><polygon points="7.5,3 12,7.5 7.5,12 3,7.5" fill="#3a78f8"/></g></svg>
<div class="t" style="left:402px;top:353px;color:#fffff0;">clka_1</div>
<div class="t" style="left:518px;top:353px;color:#fffff0;">1</div>
<div class="a" style="left:365px;top:368px;width:145px;height:1px;background:#000;"></div>
<div class="a" style="left:518px;top:368px;width:44px;height:1px;background:#000;"></div>
<svg class="a" style="left:364px;top:364px;" width="5" height="9" viewBox="0 0 5 9" shape-rendering="crispEdges"><path d="M0.5 0.5V8L4 4.5z" fill="none" stroke="#000" shape-rendering="geometricPrecision"/></svg>
<svg class="a" style="left:568px;top:39px;" width="518" height="406" viewBox="0 0 518 406" shape-rendering="crispEdges"><rect x="51" y="21" width="1" height="385" fill="#808080"/><rect x="100" y="21" width="1" height="385" fill="#808080"/><rect x="149" y="21" width="1" height="385" fill="#808080"/><rect x="198" y="21" width="1" height="385" fill="#808080"/><rect x="246" y="21" width="1" height="385" fill="#808080"/><rect x="295" y="21" width="1" height="385" fill="#808080"/><rect x="344" y="21" width="1" height="385" fill="#808080"/><rect x="393" y="21" width="1" height="385" fill="#808080"/><rect x="441" y="21" width="1" height="385" fill="#808080"/><rect x="490" y="21" width="1" height="385" fill="#808080"/><rect x="3" y="26" width="488" height="12" fill="#00ff00"/><rect x="3" y="315" width="488" height="12" fill="#00ff00"/><rect x="4" y="42" width="30" height="1" fill="#00ff00"/><rect x="34" y="42" width="1" height="13" fill="#00ff00"/><rect x="34" y="54" width="4" height="1" fill="#00ff00"/><rect x="38" y="42" width="1" height="13" fill="#00ff00"/><rect x="38" y="42" width="4" height="1" fill="#00ff00"/><rect x="42" y="42" width="1" height="13" fill="#00ff00"/><rect x="42" y="54" width="3" height="1" fill="#00ff00"/><rect x="45" y="42" width="1" height="13" fill="#00ff00"/><rect x="45" y="42" width="4" height="1" fill="#00ff00"/><rect x="49" y="42" width="1" height="13" fill="#00ff00"/><rect x="49" y="54" width="4" height="1" fill="#00ff00"/><rect x="53" y="42" width="1" height="13" fill="#00ff00"/><rect x="53" y="42" width="4" height="1" fill="#00ff00"/><rect x="57" y="42" width="1" height="13" fill="#00ff00"/><rect x="57" y="54" width="4" height="1" fill="#00ff00"/><rect x="61" y="42" width="1" height="13" fill="#00ff00"/><rect x="61" y="42" width="4" height="1" fill="#00ff00"/><rect x="65" y="42" width="1" height="13" fill="#00ff00"/><rect x="65" y="54" width="4" height="1" fill="#00ff00"/><rect x="69" y="42" width="1" height="13" fill="#00ff00"/><rect x="69" y="42" width="4" height="1" fill="#00ff00"/><rect x="73" y="42" width="1" height="13" fill="#00ff00"/><rect x="73" y="54" width="3" height="1" fill="#00ff00"/><rect x="76" y="42" width="1" height="13" fill="#00ff00"/><rect x="76" y="42" width="4" height="1" fill="#00ff00"/><rect x="80" y="42" width="1" height="13" fill="#00ff00"/><rect x="80" y="54" width="4" height="1" fill="#00ff00"/><rect x="84" y="42" width="1" height="13" fill="#00ff00"/><rect x="84" y="42" width="4" height="1" fill="#00ff00"/><rect x="88" y="42" width="1" height="13" fill="#00ff00"/><rect x="88" y="54" width="4" height="1" fill="#00ff00"/><rect x="92" y="42" width="1" height="13" fill="#00ff00"/><rect x="92" y="42" width="4" height="1" fill="#00ff00"/><rect x="96" y="42" width="1" height="13" fill="#00ff00"/><rect x="96" y="54" width="4" height="1" fill="#00ff00"/><rect x="100" y="42" width="1" height="13" fill="#00ff00"/><rect x="100" y="42" width="4" height="1" fill="#00ff00"/><rect x="104" y="42" width="1" height="13" fill="#00ff00"/><rect x="104" y="54" width="4" height="1" fill="#00ff00"/><rect x="108" y="42" width="1" height="13" fill="#00ff00"/><rect x="108" y="42" width="4" height="1" fill="#00ff00"/><rect x="112" y="42" width="1" height="13" fill="#00ff00"/><rect x="112" y="54" width="4" height="1" fill="#00ff00"/><rect x="116" y="42" width="1" height="13" fill="#00ff00"/><rect x="116" y="42" width="13" height="1" fill="#00ff00"/><rect x="129" y="42" width="1" height="13" fill="#00ff00"/><rect x="129" y="54" width="4" height="1" fill="#00ff00"/><rect x="133" y="42" width="1" height="13" fill="#00ff00"/><rect x="133" y="42" width="4" height="1" fill="#00ff00"/><rect x="137" y="42" width="1" height="13" fill="#00ff00"/><rect x="137" y="54" width="3" height="1" fill="#00ff00"/><rect x="140" y="42" width="1" height="13" fill="#00ff00"/><rect x="140" y="42" width="4" height="1" fill="#00ff00"/><rect x="144" y="42" width="1" height="13" fill="#00ff00"/><rect x="144" y="54" width="4" height="1" fill="#00ff00"/><rect x="148" y="42" width="1" height="13" fill="#00ff00"/><rect x="148" y="42" width="4" height="1" fill="#00ff00"/><rect x="152" y="42" width="1" height="13" fill="#00ff00"/><rect x="152" y="54" width="4" height="1" fill="#00ff00"/><rect x="156" y="42" width="1" height="13" fill="#00ff00"/><rect x="156" y="42" width="4" height="1" fill="#00ff00"/><rect x="160" y="42" width="1" height="13" fill="#00ff00"/><rect x="160" y="54" width="4" height="1" fill="#00ff00"/><rect x="164" y="42" width="1" height="13" fill="#00ff00"/><rect x="164" y="42" width="4" height="1" fill="#00ff00"/><rect x="168" y="42" width="1" height="13" fill="#00ff00"/><rect x="168" y="54" width="3" height="1" fill="#00ff00"/><rect x="171" y="42" width="1" height="13" fill="#00ff00"/><rect x="171" y="42" width="4" height="1" fill="#00ff00"/><rect x="175" y="42" width="1" height="13" fill="#00ff00"/><rect x="175" y="54" width="4" height="1" fill="#00ff00"/><rect x="179" y="42" width="1" height="13" fill="#00ff00"/><rect x="179" y="42" width="4" height="1" fill="#00ff00"/><rect x="183" y="42" width="1" height="13" fill="#00ff00"/><rect x="183" y="54" width="4" height="1" fill="#00ff00"/><rect x="187" y="42" width="1" height="13" fill="#00ff00"/><rect x="187" y="42" width="4" height="1" fill="#00ff00"/><rect x="191" y="42" width="1" height="13" fill="#00ff00"/><rect x="191" y="54" width="4" height="1" fill="#00ff00"/><rect x="195" y="42" width="1" height="13" fill="#00ff00"/><rect x="195" y="42" width="4" height="1" fill="#00ff00"/><rect x="199" y="42" width="1" height="13" fill="#00ff00"/><rect x="199" y="54" width="4" height="1" fill="#00ff00"/><rect x="203" y="42" width="1" height="13" fill="#00ff00"/><rect x="203" y="42" width="4" height="1" fill="#00ff00"/><rect x="207" y="42" width="1" height="13" fill="#00ff00"/><rect x="207" y="54" width="4" height="1" fill="#00ff00"/><rect x="211" y="42" width="1" height="13" fill="#00ff00"/><rect x="211" y="42" width="14" height="1" fill="#00ff00"/><rect x="225" y="42" width="1" height="13" fill="#00ff00"/><rect x="225" y="54" width="4" height="1" fill="#00ff00"/><rect x="229" y="42" width="1" height="13" fill="#00ff00"/><rect x="229" y="42" width="4" height="1" fill="#00ff00"/><rect x="233" y="42" width="1" height="13" fill="#00ff00"/><rect x="233" y="54" width="3" height="1" fill="#00ff00"/><rect x="236" y="42" width="1" height="13" fill="#00ff00"/><rect x="236" y="42" width="4" height="1" fill="#00ff00"/><rect x="240" y="42" width="1" height="13" fill="#00ff00"/><rect x="240" y="54" width="4" height="1" fill="#00ff00"/><rect x="244" y="42" width="1" height="13" fill="#00ff00"/><rect x="244" y="42" width="4" height="1" fill="#00ff00"/><rect x="248" y="42" width="1" height="13" fill="#00ff00"/><rect x="248" y="54" width="4" height="1" fill="#00ff00"/><rect x="252" y="42" width="1" height="13" fill="#00ff00"/><rect x="252" y="42" width="4" height="1" fill="#00ff00"/><rect x="256" y="42" width="1" height="13" fill="#00ff00"/><rect x="256" y="54" width="4" height="1" fill="#00ff00"/><rect x="260" y="42" width="1" height="13" fill="#00ff00"/><rect x="260" y="42" width="4" height="1" fill="#00ff00"/><rect x="264" y="42" width="1" height="13" fill="#00ff00"/><rect x="264" y="54" width="3" height="1" fill="#00ff00"/><rect x="267" y="42" width="1" height="13" fill="#00ff00"/><rect x="267" y="42" width="4" height="1" fill="#00ff00"/><rect x="271" y="42" width="1" height="13" fill="#00ff00"/><rect x="271" y="54" width="4" height="1" fill="#00ff00"/><rect x="275" y="42" width="1" height="13" fill="#00ff00"/><rect x="275" y="42" width="4" height="1" fill="#00ff00"/><rect x="279" y="42" width="1" height="13" fill="#00ff00"/><rect x="279" y="54" width="4" height="1" fill="#00ff00"/><rect x="283" y="42" width="1" height="13" fill="#00ff00"/><rect x="283" y="42" width="4" height="1" fill="#00ff00"/><rect x="287" y="42" width="1" height="13" fill="#00ff00"/><rect x="287" y="54" width="4" height="1" fill="#00ff00"/><rect x="291" y="42" width="1" height="13" fill="#00ff00"/><rect x="291" y="42" width="4" height="1" fill="#00ff00"/><rect x="295" y="42" width="1" height="13" fill="#00ff00"/><rect x="295" y="54" width="4" height="1" fill="#00ff00"/><rect x="299" y="42" width="1" height="13" fill="#00ff00"/><rect x="299" y="42" width="4" height="1" fill="#00ff00"/><rect x="303" y="42" width="1" height="13" fill="#00ff00"/><rect x="303" y="54" width="4" height="1" fill="#00ff00"/><rect x="307" y="42" width="1" height="13" fill="#00ff00"/><rect x="307" y="42" width="184" height="1" fill="#00ff00"/><rect x="4" y="59" width="28" height="1" fill="#00ff00"/><rect x="32" y="59" width="1" height="13" fill="#00ff00"/><rect x="32" y="71" width="8" height="1" fill="#00ff00"/><rect x="40" y="59" width="1" height="13" fill="#00ff00"/><rect x="40" y="59" width="7" height="1" fill="#00ff00"/><rect x="47" y="59" width="1" height="13" fill="#00ff00"/><rect x="47" y="71" width="8" height="1" fill="#00ff00"/><rect x="55" y="59" width="1" height="13" fill="#00ff00"/><rect x="55" y="59" width="24" height="1" fill="#00ff00"/><rect x="79" y="59" width="1" height="13" fill="#00ff00"/><rect x="79" y="71" width="23" height="1" fill="#00ff00"/><rect x="102" y="59" width="1" height="13" fill="#00ff00"/><rect x="102" y="59" width="25" height="1" fill="#00ff00"/><rect x="127" y="59" width="1" height="13" fill="#00ff00"/><rect x="127" y="71" width="39" height="1" fill="#00ff00"/><rect x="166" y="59" width="1" height="13" fill="#00ff00"/><rect x="166" y="59" width="57" height="1" fill="#00ff00"/><rect x="223" y="59" width="1" height="13" fill="#00ff00"/><rect x="223" y="71" width="8" height="1" fill="#00ff00"/><rect x="231" y="59" width="1" height="13" fill="#00ff00"/><rect x="231" y="59" width="8" height="1" fill="#00ff00"/><rect x="239" y="59" width="1" height="13" fill="#00ff00"/><rect x="239" y="71" width="7" height="1" fill="#00ff00"/><rect x="246" y="59" width="1" height="13" fill="#00ff00"/><rect x="246" y="59" width="24" height="1" fill="#00ff00"/><rect x="270" y="59" width="1" height="13" fill="#00ff00"/><rect x="270" y="71" width="23" height="1" fill="#00ff00"/><rect x="293" y="59" width="1" height="13" fill="#00ff00"/><rect x="293" y="59" width="198" height="1" fill="#00ff00"/><rect x="4" y="88" width="299" height="1" fill="#00ff00"/><rect x="303" y="76" width="1" height="13" fill="#00ff00"/><rect x="303" y="76" width="188" height="1" fill="#00ff00"/><rect x="4" y="105" width="314" height="1" fill="#00ff00"/><rect x="318" y="93" width="1" height="13" fill="#00ff00"/><rect x="318" y="93" width="173" height="1" fill="#00ff00"/><rect x="3" y="110" width="1" height="13" fill="#00ff00"/><rect x="4" y="110" width="8" height="1" fill="#00ff00"/><rect x="12" y="110" width="1" height="13" fill="#00ff00"/><rect x="12" y="122" width="10" height="1" fill="#00ff00"/><rect x="22" y="110" width="1" height="13" fill="#00ff00"/><rect x="22" y="110" width="469" height="1" fill="#00ff00"/><rect x="3" y="281" width="512" height="16" fill="#505050"/><rect x="5" y="127" width="311" height="1" fill="#a0e0a0"/><rect x="5" y="139" width="311" height="1" fill="#a0e0a0"/><rect x="319" y="127" width="172" height="1" fill="#a0e0a0"/><rect x="319" y="139" width="172" height="1" fill="#a0e0a0"/><rect x="4" y="127" width="1" height="2" fill="#a0e0a0"/><rect x="3" y="129" width="1" height="9" fill="#a0e0a0"/><rect x="4" y="138" width="1" height="2" fill="#a0e0a0"/><rect x="316" y="127" width="1" height="2" fill="#a0e0a0"/><rect x="317" y="129" width="1" height="9" fill="#a0e0a0"/><rect x="316" y="138" width="1" height="2" fill="#a0e0a0"/><rect x="319" y="127" width="1" height="2" fill="#a0e0a0"/><rect x="318" y="129" width="1" height="9" fill="#a0e0a0"/><rect x="319" y="138" width="1" height="2" fill="#a0e0a0"/><rect x="4" y="144" width="27" height="1" fill="#a0e0a0"/><rect x="4" y="156" width="27" height="1" fill="#a0e0a0"/><rect x="34" y="144" width="92" height="1" fill="#a0e0a0"/><rect x="34" y="156" width="92" height="1" fill="#a0e0a0"/><rect x="129" y="144" width="93" height="1" fill="#a0e0a0"/><rect x="129" y="156" width="93" height="1" fill="#a0e0a0"/><rect x="225" y="144" width="266" height="1" fill="#a0e0a0"/><rect x="225" y="156" width="266" height="1" fill="#a0e0a0"/><rect x="31" y="144" width="1" height="2" fill="#a0e0a0"/><rect x="32" y="146" width="1" height="9" fill="#a0e0a0"/><rect x="31" y="155" width="1" height="2" fill="#a0e0a0"/><rect x="34" y="144" width="1" height="2" fill="#a0e0a0"/><rect x="33" y="146" width="1" height="9" fill="#a0e0a0"/><rect x="34" y="155" width="1" height="2" fill="#a0e0a0"/><rect x="126" y="144" width="1" height="2" fill="#a0e0a0"/><rect x="127" y="146" width="1" height="9" fill="#a0e0a0"/><rect x="126" y="155" width="1" height="2" fill="#a0e0a0"/><rect x="129" y="144" width="1" height="2" fill="#a0e0a0"/><rect x="128" y="146" width="1" height="9" fill="#a0e0a0"/><rect x="129" y="155" width="1" height="2" fill="#a0e0a0"/><rect x="222" y="144" width="1" height="2" fill="#a0e0a0"/><rect x="223" y="146" width="1" height="9" fill="#a0e0a0"/><rect x="222" y="155" width="1" height="2" fill="#a0e0a0"/><rect x="225" y="144" width="1" height="2" fill="#a0e0a0"/><rect x="224" y="146" width="1" height="9" fill="#a0e0a0"/><rect x="225" y="155" width="1" height="2" fill="#a0e0a0"/><rect x="3" y="161" width="488" height="1" fill="#a0e0a0"/><rect x="3" y="173" width="488" height="1" fill="#a0e0a0"/><rect x="5" y="195" width="311" height="1" fill="#a0e0a0"/><rect x="5" y="207" width="311" height="1" fill="#a0e0a0"/><rect x="319" y="195" width="172" height="1" fill="#a0e0a0"/><rect x="319" y="207" width="172" height="1" fill="#a0e0a0"/><rect x="4" y="195" width="1" height="2" fill="#a0e0a0"/><rect x="3" y="197" width="1" height="9" fill="#a0e0a0"/><rect x="4" y="206" width="1" height="2" fill="#a0e0a0"/><rect x="316" y="195" width="1" height="2" fill="#a0e0a0"/><rect x="317" y="197" width="1" height="9" fill="#a0e0a0"/><rect x="316" y="206" width="1" height="2" fill="#a0e0a0"/><rect x="319" y="195" width="1" height="2" fill="#a0e0a0"/><rect x="318" y="197" width="1" height="9" fill="#a0e0a0"/><rect x="319" y="206" width="1" height="2" fill="#a0e0a0"/><rect x="5" y="212" width="311" height="1" fill="#a0e0a0"/><rect x="5" y="224" width="311" height="1" fill="#a0e0a0"/><rect x="319" y="212" width="172" height="1" fill="#a0e0a0"/><rect x="319" y="224" width="172" height="1" fill="#a0e0a0"/><rect x="4" y="212" width="1" height="2" fill="#a0e0a0"/><rect x="3" y="214" width="1" height="9" fill="#a0e0a0"/><rect x="4" y="223" width="1" height="2" fill="#a0e0a0"/><rect x="316" y="212" width="1" height="2" fill="#a0e0a0"/><rect x="317" y="214" width="1" height="9" fill="#a0e0a0"/><rect x="316" y="223" width="1" height="2" fill="#a0e0a0"/><rect x="319" y="212" width="1" height="2" fill="#a0e0a0"/><rect x="318" y="214" width="1" height="9" fill="#a0e0a0"/><rect x="319" y="223" width="1" height="2" fill="#a0e0a0"/><rect x="5" y="246" width="311" height="1" fill="#a0e0a0"/><rect x="5" y="258" width="311" height="1" fill="#a0e0a0"/><rect x="319" y="246" width="172" height="1" fill="#a0e0a0"/><rect x="319" y="258" width="172" height="1" fill="#a0e0a0"/><rect x="4" y="246" width="1" height="2" fill="#a0e0a0"/><rect x="3" y="248" width="1" height="9" fill="#a0e0a0"/><rect x="4" y="257" width="1" height="2" fill="#a0e0a0"/><rect x="316" y="246" width="1" height="2" fill="#a0e0a0"/><rect x="317" y="248" width="1" height="9" fill="#a0e0a0"/><rect x="316" y="257" width="1" height="2" fill="#a0e0a0"/><rect x="319" y="246" width="1" height="2" fill="#a0e0a0"/><rect x="318" y="248" width="1" height="9" fill="#a0e0a0"/><rect x="319" y="257" width="1" height="2" fill="#a0e0a0"/><rect x="5" y="263" width="311" height="1" fill="#a0e0a0"/><rect x="5" y="275" width="311" height="1" fill="#a0e0a0"/><rect x="319" y="263" width="172" height="1" fill="#a0e0a0"/><rect x="319" y="275" width="172" height="1" fill="#a0e0a0"/><rect x="4" y="263" width="1" height="2" fill="#a0e0a0"/><rect x="3" y="265" width="1" height="9" fill="#a0e0a0"/><rect x="4" y="274" width="1" height="2" fill="#a0e0a0"/><rect x="316" y="263" width="1" height="2" fill="#a0e0a0"/><rect x="317" y="265" width="1" height="9" fill="#a0e0a0"/><rect x="316" y="274" width="1" height="2" fill="#a0e0a0"/><rect x="319" y="263" width="1" height="2" fill="#a0e0a0"/><rect x="318" y="265" width="1" height="9" fill="#a0e0a0"/><rect x="319" y="274" width="1" height="2" fill="#a0e0a0"/><rect x="5" y="280" width="311" height="1" fill="#f0a0f0"/><rect x="5" y="292" width="311" height="1" fill="#f0a0f0"/><rect x="319" y="280" width="172" height="1" fill="#f0a0f0"/><rect x="319" y="292" width="172" height="1" fill="#f0a0f0"/><rect x="4" y="280" width="1" height="2" fill="#f0a0f0"/><rect x="3" y="282" width="1" height="9" fill="#f0a0f0"/><rect x="4" y="291" width="1" height="2" fill="#f0a0f0"/><rect x="316" y="280" width="1" height="2" fill="#f0a0f0"/><rect x="317" y="282" width="1" height="9" fill="#f0a0f0"/><rect x="316" y="291" width="1" height="2" fill="#f0a0f0"/><rect x="319" y="280" width="1" height="2" fill="#f0a0f0"/><rect x="318" y="282" width="1" height="9" fill="#f0a0f0"/><rect x="319" y="291" width="1" height="2" fill="#f0a0f0"/><rect x="4" y="280" width="487" height="1" fill="#a0e0a0"/><rect x="5" y="297" width="311" height="1" fill="#a0e0a0"/><rect x="5" y="309" width="311" height="1" fill="#a0e0a0"/><rect x="319" y="297" width="172" height="1" fill="#a0e0a0"/><rect x="319" y="309" width="172" height="1" fill="#a0e0a0"/><rect x="4" y="297" width="1" height="2" fill="#a0e0a0"/><rect x="3" y="299" width="1" height="9" fill="#a0e0a0"/><rect x="4" y="308" width="1" height="2" fill="#a0e0a0"/><rect x="316" y="297" width="1" height="2" fill="#a0e0a0"/><rect x="317" y="299" width="1" height="9" fill="#a0e0a0"/><rect x="316" y="308" width="1" height="2" fill="#a0e0a0"/><rect x="319" y="297" width="1" height="2" fill="#a0e0a0"/><rect x="318" y="299" width="1" height="9" fill="#a0e0a0"/><rect x="319" y="308" width="1" height="2" fill="#a0e0a0"/><rect x="317" y="22" width="3" height="384" fill="#ffd400"/><rect x="317" y="26" width="3" height="12" fill="#ff2800"/><rect x="317" y="315" width="3" height="12" fill="#ff2800"/><rect x="317" y="42" width="3" height="1" fill="#ff2800"/><rect x="317" y="59" width="3" height="1" fill="#ff2800"/><rect x="317" y="76" width="3" height="1" fill="#ff2800"/><rect x="318" y="93" width="1" height="13" fill="#ff2800"/><rect x="317" y="105" width="1" height="1" fill="#ff2800"/><rect x="317" y="110" width="3" height="1" fill="#ff2800"/><rect x="317" y="127" width="3" height="1" fill="#5030a0"/><rect x="317" y="139" width="3" height="1" fill="#5030a0"/><rect x="317" y="144" width="3" height="1" fill="#5030a0"/><rect x="317" y="156" width="3" height="1" fill="#5030a0"/><rect x="317" y="195" width="3" height="1" fill="#5030a0"/><rect x="317" y="207" width="3" height="1" fill="#5030a0"/><rect x="317" y="212" width="3" height="1" fill="#5030a0"/><rect x="317" y="224" width="3" height="1" fill="#5030a0"/><rect x="317" y="246" width="3" height="1" fill="#5030a0"/><rect x="317" y="258" width="3" height="1" fill="#5030a0"/><rect x="317" y="263" width="3" height="1" fill="#5030a0"/><rect x="317" y="275" width="3" height="1" fill="#5030a0"/><rect x="317" y="280" width="3" height="1" fill="#5030a0"/><rect x="317" y="292" width="3" height="1" fill="#5030a0"/><rect x="317" y="297" width="3" height="1" fill="#5030a0"/><rect x="317" y="309" width="3" height="1" fill="#5030a0"/><rect x="317" y="129" width="1" height="9" fill="#5030a0"/><rect x="318" y="129" width="1" height="9" fill="#5030a0"/><rect x="317" y="197" width="1" height="9" fill="#5030a0"/><rect x="318" y="197" width="1" height="9" fill="#5030a0"/><rect x="317" y="214" width="1" height="9" fill="#5030a0"/><rect x="318" y="214" width="1" height="9" fill="#5030a0"/><rect x="317" y="248" width="1" height="9" fill="#5030a0"/><rect x="318" y="248" width="1" height="9" fill="#5030a0"/><rect x="317" y="265" width="1" height="9" fill="#5030a0"/><rect x="318" y="265" width="1" height="9" fill="#5030a0"/><rect x="317" y="282" width="1" height="9" fill="#5030a0"/><rect x="318" y="282" width="1" height="9" fill="#5030a0"/><rect x="317" y="299" width="1" height="9" fill="#5030a0"/><rect x="318" y="299" width="1" height="9" fill="#5030a0"/></svg>
<div class="t" style="left:576px;top:167px;color:#fff;">8'h00</div>
<div class="t" style="left:890px;top:167px;color:#fff;">8'hFF</div>
<div class="t" style="left:576px;top:184px;color:#fff;">8...</div>
<div class="t" style="left:604px;top:184px;color:#fff;">8'h1D</div>
<div class="t" style="left:699px;top:184px;color:#fff;">8'hF0</div>
<div class="t" style="left:795px;top:184px;color:#fff;">8'h1D</div>
<div class="t" style="left:576px;top:201px;color:#fff;">40000 ps</div>
<div class="t" style="left:576px;top:235px;color:#fff;">8'h00</div>
<div class="t" style="left:890px;top:235px;color:#fff;">8'hFF</div>
<div class="t" style="left:576px;top:252px;color:#fff;">8'h00</div>
<div class="t" style="left:890px;top:252px;color:#fff;">8'h1D</div>
<div class="t" style="left:576px;top:286px;color:#fff;">8'h00</div>
<div class="t" style="left:890px;top:286px;color:#fff;">8'h1D</div>
<div class="t" style="left:576px;top:303px;color:#fff;">8'h00</div>
<div class="t" style="left:890px;top:303px;color:#fff;">8'hFF</div>
<div class="t" style="left:576px;top:320px;color:#b8a0f0;">8'h00</div>
<div class="t" style="left:890px;top:320px;color:#b8a0f0;">8'hFF</div>
<div class="t" style="left:576px;top:337px;color:#fff;">8'h00</div>
<div class="t" style="left:890px;top:337px;color:#fff;">8'h1D</div>
<div class="a" style="left:354px;top:445px;width:753px;height:2px;background:#fff;"></div>
<div class="a" style="left:354px;top:447px;width:161px;height:40px;background:#808080;"></div>
<div class="a" style="left:516px;top:447px;width:50px;height:40px;background:#808080;"></div>
<div class="a" style="left:568px;top:447px;width:518px;height:39px;background:#000;"></div>
<div class="a" style="left:568px;top:486px;width:519px;height:1px;background:#d4d0c8;"></div>
<div class="a" style="left:1087px;top:445px;width:1px;height:42px;background:#fff;"></div>
<div class="a" style="left:1088px;top:445px;width:1px;height:42px;background:#d0d0d0;"></div>
<div class="a" style="left:1089px;top:447px;width:17px;height:40px;background:#808080;"></div>
<svg class="a" style="left:363px;top:452px;" width="36" height="12" viewBox="0 0 36 12" shape-rendering="crispEdges"><path d="M1 10H10M1 10L3 8M10 10L8 8" stroke="#5a90d8"/><path d="M2 8L4.5 2L7 8M6 8L8.5 2L11 8" stroke="#a0a0a8" fill="none" stroke-width="1.3"/><rect x="12" y="1" width="11" height="10" fill="#7aa0d8"/><rect x="13" y="3" width="9" height="7" fill="#b8c8e0"/><path d="M14 5h6M14 7h5" stroke="#5070a0"/><path d="M16 12L21 7" stroke="#6a90c8" stroke-width="2"/><circle cx="29.5" cy="6" r="5" fill="#70b868" stroke="#4a9a40" shape-rendering="geometricPrecision"/><circle cx="29.5" cy="6" r="3" fill="#e8f0e0" shape-rendering="geometricPrecision"/><path d="M27.5 6h4M29.5 4v4" stroke="#5aa050" stroke-width="1.2"/></svg>
<div class="t" style="right:610px;top:452px;color:#f0f0f0;">Now</div>
<div class="t" style="left:519px;top:452px;color:#f0f0f0;">5000 us</div>
<div class="a" style="left:403px;top:469px;width:111px;height:17px;background:#fff;"></div>
<div class="a" style="left:516px;top:469px;width:50px;height:17px;background:#fff;"></div>
<svg class="a" style="left:366px;top:471px;" width="37" height="14" viewBox="0 0 37 14" shape-rendering="crispEdges"><path d="M3 6V3.5A3 3 0 0 1 9 3.5V5" stroke="#b8b0a0" stroke-width="1.3" fill="none" shape-rendering="geometricPrecision"/><rect x="1" y="6" width="10" height="7" fill="#e8cc78" stroke="#c8a850"/><rect x="4" y="8" width="4" height="3" fill="#c0a868"/><path d="M13 13L20 6" stroke="#7898d0" stroke-width="2.3" shape-rendering="geometricPrecision"/><path d="M19 3A3 3 0 1 0 23 7" stroke="#8098c8" stroke-width="1.5" fill="none" shape-rendering="geometricPrecision"/><circle cx="30.5" cy="7" r="5.5" fill="#e06060" stroke="#c04040" shape-rendering="geometricPrecision"/><path d="M28 7h5" stroke="#fff" stroke-width="1.6"/></svg>
<div class="t" style="right:610px;top:472px;color:#000;">Cursor 1</div>
<div class="t" style="left:519px;top:472px;color:#000;">1001 us</div>
<svg class="a" style="left:568px;top:447px;" width="518" height="41" viewBox="0 0 518 41" shape-rendering="crispEdges"><rect x="7" y="3" width="1" height="4" fill="#00e000"/><rect x="12" y="3" width="1" height="4" fill="#00e000"/><rect x="17" y="3" width="1" height="4" fill="#00e000"/><rect x="22" y="3" width="1" height="4" fill="#00e000"/><rect x="27" y="3" width="1" height="4" fill="#00e000"/><rect x="32" y="3" width="1" height="4" fill="#00e000"/><rect x="36" y="3" width="1" height="4" fill="#00e000"/><rect x="41" y="3" width="1" height="4" fill="#00e000"/><rect x="46" y="3" width="1" height="4" fill="#00e000"/><rect x="51" y="0" width="1" height="7" fill="#00e000"/><rect x="56" y="3" width="1" height="4" fill="#00e000"/><rect x="61" y="3" width="1" height="4" fill="#00e000"/><rect x="66" y="3" width="1" height="4" fill="#00e000"/><rect x="71" y="3" width="1" height="4" fill="#00e000"/><rect x="75" y="3" width="1" height="4" fill="#00e000"/><rect x="80" y="3" width="1" height="4" fill="#00e000"/><rect x="85" y="3" width="1" height="4" fill="#00e000"/><rect x="90" y="3" width="1" height="4" fill="#00e000"/><rect x="95" y="3" width="1" height="4" fill="#00e000"/><rect x="100" y="0" width="1" height="7" fill="#00e000"/><rect x="105" y="3" width="1" height="4" fill="#00e000"/><rect x="110" y="3" width="1" height="4" fill="#00e000"/><rect x="115" y="3" width="1" height="4" fill="#00e000"/><rect x="120" y="3" width="1" height="4" fill="#00e000"/><rect x="124" y="3" width="1" height="4" fill="#00e000"/><rect x="129" y="3" width="1" height="4" fill="#00e000"/><rect x="134" y="3" width="1" height="4" fill="#00e000"/><rect x="139" y="3" width="1" height="4" fill="#00e000"/><rect x="144" y="3" width="1" height="4" fill="#00e000"/><rect x="149" y="0" width="1" height="7" fill="#00e000"/><rect x="154" y="3" width="1" height="4" fill="#00e000"/><rect x="159" y="3" width="1" height="4" fill="#00e000"/><rect x="164" y="3" width="1" height="4" fill="#00e000"/><rect x="169" y="3" width="1" height="4" fill="#00e000"/><rect x="173" y="3" width="1" height="4" fill="#00e000"/><rect x="178" y="3" width="1" height="4" fill="#00e000"/><rect x="183" y="3" width="1" height="4" fill="#00e000"/><rect x="188" y="3" width="1" height="4" fill="#00e000"/><rect x="193" y="3" width="1" height="4" fill="#00e000"/><rect x="198" y="0" width="1" height="7" fill="#00e000"/><rect x="203" y="3" width="1" height="4" fill="#00e000"/><rect x="208" y="3" width="1" height="4" fill="#00e000"/><rect x="212" y="3" width="1" height="4" fill="#00e000"/><rect x="217" y="3" width="1" height="4" fill="#00e000"/><rect x="222" y="3" width="1" height="4" fill="#00e000"/><rect x="227" y="3" width="1" height="4" fill="#00e000"/><rect x="232" y="3" width="1" height="4" fill="#00e000"/><rect x="236" y="3" width="1" height="4" fill="#00e000"/><rect x="241" y="3" width="1" height="4" fill="#00e000"/><rect x="246" y="0" width="1" height="7" fill="#00e000"/><rect x="251" y="3" width="1" height="4" fill="#00e000"/><rect x="256" y="3" width="1" height="4" fill="#00e000"/><rect x="261" y="3" width="1" height="4" fill="#00e000"/><rect x="266" y="3" width="1" height="4" fill="#00e000"/><rect x="270" y="3" width="1" height="4" fill="#00e000"/><rect x="275" y="3" width="1" height="4" fill="#00e000"/><rect x="280" y="3" width="1" height="4" fill="#00e000"/><rect x="285" y="3" width="1" height="4" fill="#00e000"/><rect x="290" y="3" width="1" height="4" fill="#00e000"/><rect x="295" y="0" width="1" height="7" fill="#00e000"/><rect x="300" y="3" width="1" height="4" fill="#00e000"/><rect x="305" y="3" width="1" height="4" fill="#00e000"/><rect x="310" y="3" width="1" height="4" fill="#00e000"/><rect x="315" y="3" width="1" height="4" fill="#00e000"/><rect x="319" y="3" width="1" height="4" fill="#ff2000"/><rect x="324" y="3" width="1" height="4" fill="#00e000"/><rect x="329" y="3" width="1" height="4" fill="#00e000"/><rect x="334" y="3" width="1" height="4" fill="#00e000"/><rect x="339" y="3" width="1" height="4" fill="#00e000"/><rect x="344" y="0" width="1" height="7" fill="#00e000"/><rect x="349" y="3" width="1" height="4" fill="#00e000"/><rect x="354" y="3" width="1" height="4" fill="#00e000"/><rect x="359" y="3" width="1" height="4" fill="#00e000"/><rect x="364" y="3" width="1" height="4" fill="#00e000"/><rect x="368" y="3" width="1" height="4" fill="#00e000"/><rect x="373" y="3" width="1" height="4" fill="#00e000"/><rect x="378" y="3" width="1" height="4" fill="#00e000"/><rect x="383" y="3" width="1" height="4" fill="#00e000"/><rect x="388" y="3" width="1" height="4" fill="#00e000"/><rect x="393" y="0" width="1" height="7" fill="#00e000"/><rect x="398" y="3" width="1" height="4" fill="#00e000"/><rect x="403" y="3" width="1" height="4" fill="#00e000"/><rect x="407" y="3" width="1" height="4" fill="#00e000"/><rect x="412" y="3" width="1" height="4" fill="#00e000"/><rect x="417" y="3" width="1" height="4" fill="#00e000"/><rect x="422" y="3" width="1" height="4" fill="#00e000"/><rect x="427" y="3" width="1" height="4" fill="#00e000"/><rect x="431" y="3" width="1" height="4" fill="#00e000"/><rect x="436" y="3" width="1" height="4" fill="#00e000"/><rect x="441" y="0" width="1" height="7" fill="#00e000"/><rect x="446" y="3" width="1" height="4" fill="#00e000"/><rect x="451" y="3" width="1" height="4" fill="#00e000"/><rect x="456" y="3" width="1" height="4" fill="#00e000"/><rect x="461" y="3" width="1" height="4" fill="#00e000"/><rect x="465" y="3" width="1" height="4" fill="#00e000"/><rect x="470" y="3" width="1" height="4" fill="#00e000"/><rect x="475" y="3" width="1" height="4" fill="#00e000"/><rect x="480" y="3" width="1" height="4" fill="#00e000"/><rect x="485" y="3" width="1" height="4" fill="#00e000"/><rect x="490" y="0" width="1" height="7" fill="#00e000"/><rect x="495" y="3" width="1" height="4" fill="#00e000"/><rect x="500" y="3" width="1" height="4" fill="#00e000"/><rect x="505" y="3" width="1" height="4" fill="#00e000"/><rect x="510" y="3" width="1" height="4" fill="#00e000"/><rect x="514" y="3" width="1" height="4" fill="#00e000"/><rect x="3" y="22" width="512" height="1" fill="#808080"/><rect x="317" y="0" width="3" height="22" fill="#ffd400"/><rect x="319" y="3" width="1" height="4" fill="#ff2000"/></svg>
<div class="t" style="left:571px;top:457px;color:#00ff00;">00 us</div>
<div class="t" style="left:618px;width:100px;text-align:center;top:457px;color:#00ff00">1000 us</div>
<div class="t" style="left:715.5px;width:100px;text-align:center;top:457px;color:#00ff00">2000 us</div>
<div class="t" style="left:813px;width:100px;text-align:center;top:457px;color:#00ff00">3000 us</div>
<div class="t" style="left:910.75px;width:100px;text-align:center;top:457px;color:#00ff00">4000 us</div>
<div class="t" style="left:1008px;width:100px;text-align:center;top:457px;color:#00ff00">5000 us</div>
<div class="a" style="left:851px;top:470px;width:69px;height:14px;border:1px solid #e0b000;background:#000"></div>
<div class="t" style="left:854px;top:473px;color:#ffd000;letter-spacing:-0.6px">3240. 1001 us</div>
<div class="a" style="left:354px;top:487px;width:753px;height:1px;background:#fff;"></div>
<div class="a" style="left:354px;top:488px;width:214px;height:19px;background:#808080;"></div>
<div class="a" style="left:568px;top:488px;width:538px;height:19px;background:#d4d0c8;"></div>
<div class="a" style="left:568px;top:489px;width:519px;height:1px;background:#fff;"></div>
<div class="a" style="left:515px;top:445px;width:1px;height:62px;background:#fff;"></div>
<div class="a" style="left:566px;top:445px;width:1px;height:62px;background:#e8e8e8;"></div>
<div class="a" style="left:567px;top:445px;width:1px;height:62px;background:#fff;"></div>
<div class="a" style="left:363px;top:490px;width:151px;height:16px;background:#d4d0c8;"></div>
<div class="a" style="left:495px;top:490px;width:2px;height:16px;background-image:repeating-conic-gradient(#fff 0 25%, #d4d0c8 0 50%);background-size:2px 2px"></div>
<div class="a" style="left:363px;top:490px;width:13px;height:14px;background:#d4d0c8;border:1px solid;border-color:#fff #404040 #404040 #fff;box-shadow:inset -1px -1px #808080"></div>
<svg class="a" style="left:368px;top:494px;" width="5" height="8" viewBox="0 0 5 8" shape-rendering="crispEdges"><path d="M3.5 0V7L0 3.5z" fill="#000" shape-rendering="geometricPrecision"/></svg>
<div class="a" style="left:378px;top:490px;width:115px;height:14px;background:#d4d0c8;border:1px solid;border-color:#fff #404040 #404040 #fff;box-shadow:inset -1px -1px #808080"></div>
<div class="a" style="left:497px;top:490px;width:14px;height:14px;background:#d4d0c8;border:1px solid;border-color:#fff #404040 #404040 #fff;box-shadow:inset -1px -1px #808080"></div>
<svg class="a" style="left:503px;top:494px;" width="5" height="8" viewBox="0 0 5 8" shape-rendering="crispEdges"><path d="M0 0V7L3.5 3.5z" fill="#000" shape-rendering="geometricPrecision"/></svg>
<div class="a" style="left:516px;top:490px;width:49px;height:16px;background:#d4d0c8;"></div>
<div class="a" style="left:516px;top:490px;width:13px;height:14px;background:#d4d0c8;border:1px solid;border-color:#fff #404040 #404040 #fff;box-shadow:inset -1px -1px #808080"></div>
<svg class="a" style="left:521px;top:494px;" width="5" height="8" viewBox="0 0 5 8" shape-rendering="crispEdges"><path d="M3.5 0V7L0 3.5z" fill="#000" shape-rendering="geometricPrecision"/></svg>
<div class="a" style="left:531px;top:490px;width:14px;height:14px;background:#d4d0c8;border:1px solid;border-color:#fff #404040 #404040 #fff;box-shadow:inset -1px -1px #808080"></div>
<div class="a" style="left:548px;top:490px;width:15px;height:14px;background:#d4d0c8;border:1px solid;border-color:#fff #404040 #404040 #fff;box-shadow:inset -1px -1px #808080"></div>
<svg class="a" style="left:554px;top:494px;" width="5" height="8" viewBox="0 0 5 8" shape-rendering="crispEdges"><path d="M0 0V7L3.5 3.5z" fill="#000" shape-rendering="geometricPrecision"/></svg>
<div class="a" style="left:569px;top:490px;width:13px;height:14px;background:#d4d0c8;border:1px solid;border-color:#fff #404040 #404040 #fff;box-shadow:inset -1px -1px #808080"></div>
<svg class="a" style="left:574px;top:494px;" width="5" height="8" viewBox="0 0 5 8" shape-rendering="crispEdges"><path d="M3.5 0V7L0 3.5z" fill="#000" shape-rendering="geometricPrecision"/></svg>
<div class="a" style="left:585px;top:490px;width:1px;height:16px;background:#fff;"></div>
<div class="a" style="left:883px;top:491px;width:1px;height:13px;background:#ffd000;"></div>
<div class="a" style="left:1070px;top:490px;width:14px;height:14px;background:#d4d0c8;border:1px solid;border-color:#fff #404040 #404040 #fff;box-shadow:inset -1px -1px #808080"></div>
<svg class="a" style="left:1076px;top:494px;" width="5" height="8" viewBox="0 0 5 8" shape-rendering="crispEdges"><path d="M0 0V7L3.5 3.5z" fill="#000" shape-rendering="geometricPrecision"/></svg>
<div class="a" style="left:1089px;top:489px;width:17px;height:18px;background:#808080;"></div>
<div class="a" style="left:354px;top:507px;width:753px;height:1px;background:#fff;"></div>
<div class="a" style="left:2px;top:17px;width:166px;height:1px;background:#808080;"></div>
<div class="a" style="left:3px;top:18px;width:164px;height:1px;background:#fff;"></div>
<div class="a" style="left:2px;top:17px;width:1px;height:471px;background:#808080;"></div>
<div class="a" style="left:3px;top:18px;width:1px;height:469px;background:#fff;"></div>
<div class="a" style="left:166px;top:18px;width:1px;height:469px;background:#808080;"></div>
<div class="a" style="left:167px;top:17px;width:1px;height:471px;background:#fff;"></div>
<div class="a" style="left:3px;top:486px;width:164px;height:1px;background:#808080;"></div>
<div class="a" style="left:2px;top:487px;width:166px;height:1px;background:#fff;"></div>
<div class="a" style="left:174px;top:17px;width:171px;height:1px;background:#808080;"></div>
<div class="a" style="left:175px;top:18px;width:169px;height:1px;background:#fff;"></div>
<div class="a" style="left:174px;top:17px;width:1px;height:244px;background:#808080;"></div>
<div class="a" style="left:175px;top:18px;width:1px;height:242px;background:#fff;"></div>
<div class="a" style="left:343px;top:18px;width:1px;height:242px;background:#808080;"></div>
<div class="a" style="left:344px;top:17px;width:1px;height:244px;background:#fff;"></div>
<div class="a" style="left:175px;top:259px;width:169px;height:1px;background:#808080;"></div>
<div class="a" style="left:174px;top:260px;width:171px;height:1px;background:#fff;"></div>
<div class="a" style="left:174px;top:267px;width:171px;height:1px;background:#808080;"></div>
<div class="a" style="left:175px;top:268px;width:169px;height:1px;background:#fff;"></div>
<div class="a" style="left:174px;top:267px;width:1px;height:244px;background:#808080;"></div>
<div class="a" style="left:175px;top:268px;width:1px;height:242px;background:#fff;"></div>
<div class="a" style="left:343px;top:268px;width:1px;height:242px;background:#808080;"></div>
<div class="a" style="left:344px;top:267px;width:1px;height:244px;background:#fff;"></div>
<div class="a" style="left:175px;top:509px;width:169px;height:1px;background:#808080;"></div>
<div class="a" style="left:174px;top:510px;width:171px;height:1px;background:#fff;"></div>
<div class="a" style="left:351px;top:17px;width:759px;height:1px;background:#808080;"></div>
<div class="a" style="left:352px;top:18px;width:757px;height:1px;background:#fff;"></div>
<div class="a" style="left:351px;top:17px;width:1px;height:494px;background:#808080;"></div>
<div class="a" style="left:352px;top:18px;width:1px;height:492px;background:#fff;"></div>
<div class="a" style="left:1108px;top:18px;width:1px;height:492px;background:#808080;"></div>
<div class="a" style="left:1109px;top:17px;width:1px;height:494px;background:#fff;"></div>
<div class="a" style="left:352px;top:509px;width:757px;height:1px;background:#808080;"></div>
<div class="a" style="left:351px;top:510px;width:759px;height:1px;background:#fff;"></div>
</body></html>
